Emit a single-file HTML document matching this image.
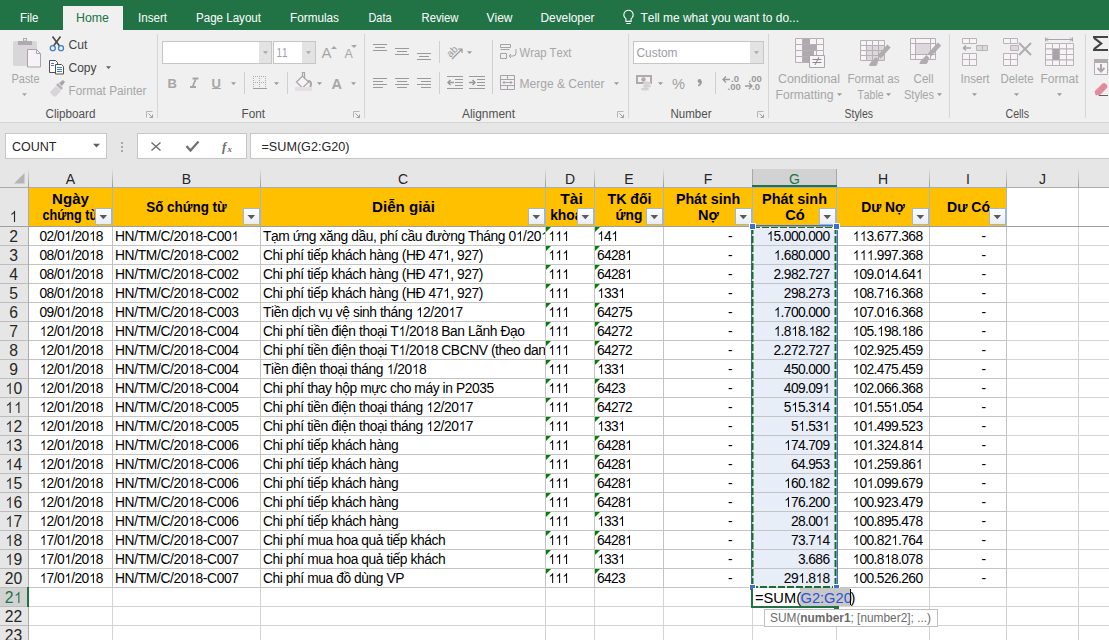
<!DOCTYPE html>
<html><head><meta charset="utf-8"><title>Excel</title>
<style>html,body{margin:0;padding:0;width:1109px;height:640px;overflow:hidden;background:#fff;font-family:"Liberation Sans",sans-serif;}svg{display:block} text{font-kerning:none}</style>
</head><body>
<svg width="1109" height="640" viewBox="0 0 1109 640" font-family="Liberation Sans, sans-serif" shape-rendering="auto"><defs><linearGradient id="hsep" x1="0" y1="0" x2="0" y2="1"><stop offset="0" stop-color="#e2e2e2"/><stop offset="1" stop-color="#9a9a9a"/></linearGradient><linearGradient id="fb" x1="0" y1="0" x2="0" y2="1"><stop offset="0" stop-color="#ffffff"/><stop offset="1" stop-color="#e8ecf2"/></linearGradient></defs><rect x="0" y="0" width="1109" height="30" fill="#217346" />
<rect x="63" y="6" width="60" height="25" fill="#f0f0f0" />
<text x="20" y="22" font-size="12" fill="#ffffff" textLength="18.5" lengthAdjust="spacingAndGlyphs" >File</text>
<text x="138" y="22" font-size="12" fill="#ffffff" textLength="29" lengthAdjust="spacingAndGlyphs" >Insert</text>
<text x="196" y="22" font-size="12" fill="#ffffff" textLength="65" lengthAdjust="spacingAndGlyphs" >Page Layout</text>
<text x="290" y="22" font-size="12" fill="#ffffff" textLength="49" lengthAdjust="spacingAndGlyphs" >Formulas</text>
<text x="368.5" y="22" font-size="12" fill="#ffffff" textLength="23" lengthAdjust="spacingAndGlyphs" >Data</text>
<text x="421.5" y="22" font-size="12" fill="#ffffff" textLength="37" lengthAdjust="spacingAndGlyphs" >Review</text>
<text x="486.5" y="22" font-size="12" fill="#ffffff" textLength="26" lengthAdjust="spacingAndGlyphs" >View</text>
<text x="540.5" y="22" font-size="12" fill="#ffffff" textLength="54" lengthAdjust="spacingAndGlyphs" >Developer</text>
<text x="76" y="22" font-size="12" fill="#217346" textLength="33" lengthAdjust="spacingAndGlyphs" >Home</text>
<path d="M628.5 10.2 a4.6 4.6 0 0 0 -2.6 8.4 v2.8 h5.2 v-2.8 a4.6 4.6 0 0 0 -2.6 -8.4 z M626.3 23.5 h4.4" fill="none" stroke="#ffffff" stroke-width="1.1" />
<text x="640.5" y="22" font-size="12" fill="#ffffff" textLength="158.5" lengthAdjust="spacingAndGlyphs" >Tell me what you want to do...</text>
<rect x="0" y="30" width="1109" height="92" fill="#f0f0f0" />
<rect x="0" y="122" width="1109" height="1" fill="#d5d5d5" />
<rect x="157" y="34" width="1" height="84" fill="#d5d5d5" />
<rect x="364" y="34" width="1" height="84" fill="#d5d5d5" />
<rect x="628" y="34" width="1" height="84" fill="#d5d5d5" />
<rect x="768" y="34" width="1" height="84" fill="#d5d5d5" />
<rect x="949" y="34" width="1" height="84" fill="#d5d5d5" />
<rect x="1085" y="34" width="1" height="84" fill="#d5d5d5" />
<text x="45.5" y="118" font-size="12" fill="#505050" textLength="50" lengthAdjust="spacingAndGlyphs" >Clipboard</text>
<text x="241.5" y="118" font-size="12" fill="#505050" textLength="23.5" lengthAdjust="spacingAndGlyphs" >Font</text>
<text x="462" y="118" font-size="12" fill="#505050" textLength="53" lengthAdjust="spacingAndGlyphs" >Alignment</text>
<text x="670.5" y="118" font-size="12" fill="#505050" textLength="41" lengthAdjust="spacingAndGlyphs" >Number</text>
<text x="844.5" y="118" font-size="12" fill="#505050" textLength="28.5" lengthAdjust="spacingAndGlyphs" >Styles</text>
<text x="1005.5" y="118" font-size="12" fill="#505050" textLength="23.5" lengthAdjust="spacingAndGlyphs" >Cells</text>
<path d="M146.5 117.5 v-6 h6" fill="none" stroke="#b4b4b4" stroke-width="1" />
<path d="M148.5 113.5 l4 4 M152.5 114.5 v3 h-3" fill="none" stroke="#a0a0a0" stroke-width="1" />
<path d="M353.5 117.5 v-6 h6" fill="none" stroke="#b4b4b4" stroke-width="1" />
<path d="M355.5 113.5 l4 4 M359.5 114.5 v3 h-3" fill="none" stroke="#a0a0a0" stroke-width="1" />
<path d="M617.5 117.5 v-6 h6" fill="none" stroke="#b4b4b4" stroke-width="1" />
<path d="M619.5 113.5 l4 4 M623.5 114.5 v3 h-3" fill="none" stroke="#a0a0a0" stroke-width="1" />
<path d="M757.5 117.5 v-6 h6" fill="none" stroke="#b4b4b4" stroke-width="1" />
<path d="M759.5 113.5 l4 4 M763.5 114.5 v3 h-3" fill="none" stroke="#a0a0a0" stroke-width="1" />
<rect x="13" y="41" width="24" height="25" fill="#d9d6da" rx="1.5"/>
<rect x="18" y="41" width="14" height="4" fill="#aeaaae" />
<rect x="23" y="38" width="4" height="4" fill="#aeaaae" />
<rect x="24" y="39" width="2" height="1.5" fill="#f0f0f0" />
<path d="M27.5 49.5 h9 l4 4 v13.5 h-13 z" fill="#f6f2f6" stroke="#a8a4a8" stroke-width="1" />
<path d="M36.5 49.5 v4 h4" fill="none" stroke="#a8a4a8" stroke-width="1" />
<text x="11.5" y="83" font-size="12" fill="#a6a6a6" textLength="28" lengthAdjust="spacingAndGlyphs" >Paste</text>
<path d="M22.0 93.3 h5 l-2.5 2.8 z" fill="#a6a6a6" />
<path d="M52.5 36.5 L59.5 46 M60.5 36.5 L53.5 46" fill="none" stroke="#484848" stroke-width="1.6" />
<circle cx="52.8" cy="48.2" r="2.5" fill="none" stroke="#3d7fc9" stroke-width="1.3"/>
<circle cx="61" cy="48.2" r="2.5" fill="none" stroke="#3d7fc9" stroke-width="1.3"/>
<text x="68.5" y="49" font-size="12" fill="#444444" textLength="19" lengthAdjust="spacingAndGlyphs" >Cut</text>
<path d="M49.5 60.5 h6 l2 2 v10 h-8 z" fill="#ffffff" stroke="#505050" stroke-width="1" />
<path d="M55.5 64.5 h6 l2 2 v7.5 h-8 z" fill="#ffffff" stroke="#505050" stroke-width="1" />
<rect x="57" y="67" width="5" height="1" fill="#3d7fc9" />
<rect x="57" y="69" width="5" height="1" fill="#3d7fc9" />
<rect x="57" y="71" width="5" height="1" fill="#3d7fc9" />
<rect x="51" y="63" width="3" height="1" fill="#3d7fc9" />
<rect x="51" y="65" width="3" height="1" fill="#3d7fc9" />
<text x="68.5" y="72" font-size="12" fill="#444444" textLength="28" lengthAdjust="spacingAndGlyphs" >Copy</text>
<path d="M106.0 66.3 h5 l-2.5 2.8 z" fill="#606060" />
<path d="M50 92 l6 -6 l5 5 l-6 6 q-3 -1 -5 -5 z" fill="#d8d4d8" />
<path d="M56 85 l2 -2 l5 5 l-2 2 z" fill="#b8b4b8" />
<path d="M59 83 l4 -3 l2 2 l-3 4 z" fill="#a8a4a8" />
<text x="68.5" y="95" font-size="12" fill="#a6a6a6" textLength="78" lengthAdjust="spacingAndGlyphs" >Format Painter</text>
<rect x="162" y="41" width="110" height="23" fill="#c6c6c6" />
<rect x="163" y="42" width="108" height="21" fill="#ffffff" />
<rect x="259" y="42" width="12" height="21" fill="#e3e3e3" />
<path d="M263.0 51.3 h5 l-2.5 2.8 z" fill="#a6a6a6" />
<rect x="273" y="41" width="43" height="23" fill="#c6c6c6" />
<rect x="274" y="42" width="41" height="21" fill="#ffffff" />
<rect x="302" y="42" width="13" height="21" fill="#e3e3e3" />
<path d="M306.0 51.3 h5 l-2.5 2.8 z" fill="#a6a6a6" />
<text x="276.5" y="57" font-size="12" fill="#a09aa8" textLength="11" lengthAdjust="spacingAndGlyphs" >11</text>
<text x="321.5" y="58" font-size="15" fill="#a6a6a6" >A</text>
<path d="M331 49 l3 -3 l3 3 z" fill="#a6a6a6" />
<text x="344.5" y="58" font-size="12.5" fill="#a6a6a6" >A</text>
<path d="M351 45 h6 l-3 3 z" fill="#a6a6a6" />
<text x="167.5" y="87.5" font-size="13" fill="#a6a6a6" font-weight="bold" >B</text>
<path d="M192.5 78.5 h6 M190 87 h6 M196 78.5 L192.5 87" fill="none" stroke="#a6a6a6" stroke-width="1.8" />
<text x="211.5" y="87.5" font-size="13" fill="#a6a6a6" font-weight="bold" >U</text>
<rect x="212" y="88" width="9" height="1" fill="#a6a6a6" />
<path d="M231.0 82.3 h5 l-2.5 2.8 z" fill="#9a9a9a" />
<rect x="244" y="72" width="1" height="22" fill="#d0d0d0" />
<rect x="253" y="76" width="1" height="1" fill="#b0a8b8" />
<rect x="255" y="76" width="1" height="1" fill="#b0a8b8" />
<rect x="257" y="76" width="1" height="1" fill="#b0a8b8" />
<rect x="259" y="76" width="1" height="1" fill="#b0a8b8" />
<rect x="261" y="76" width="1" height="1" fill="#b0a8b8" />
<rect x="263" y="76" width="1" height="1" fill="#b0a8b8" />
<rect x="265" y="76" width="1" height="1" fill="#b0a8b8" />
<rect x="253" y="82" width="1" height="1" fill="#b0a8b8" />
<rect x="255" y="82" width="1" height="1" fill="#b0a8b8" />
<rect x="257" y="82" width="1" height="1" fill="#b0a8b8" />
<rect x="259" y="82" width="1" height="1" fill="#b0a8b8" />
<rect x="261" y="82" width="1" height="1" fill="#b0a8b8" />
<rect x="263" y="82" width="1" height="1" fill="#b0a8b8" />
<rect x="265" y="82" width="1" height="1" fill="#b0a8b8" />
<rect x="253" y="76" width="1" height="1" fill="#b0a8b8" />
<rect x="253" y="78" width="1" height="1" fill="#b0a8b8" />
<rect x="253" y="80" width="1" height="1" fill="#b0a8b8" />
<rect x="253" y="82" width="1" height="1" fill="#b0a8b8" />
<rect x="253" y="84" width="1" height="1" fill="#b0a8b8" />
<rect x="253" y="86" width="1" height="1" fill="#b0a8b8" />
<rect x="259" y="76" width="1" height="1" fill="#b0a8b8" />
<rect x="259" y="78" width="1" height="1" fill="#b0a8b8" />
<rect x="259" y="80" width="1" height="1" fill="#b0a8b8" />
<rect x="259" y="82" width="1" height="1" fill="#b0a8b8" />
<rect x="259" y="84" width="1" height="1" fill="#b0a8b8" />
<rect x="259" y="86" width="1" height="1" fill="#b0a8b8" />
<rect x="265" y="76" width="1" height="1" fill="#b0a8b8" />
<rect x="265" y="78" width="1" height="1" fill="#b0a8b8" />
<rect x="265" y="80" width="1" height="1" fill="#b0a8b8" />
<rect x="265" y="82" width="1" height="1" fill="#b0a8b8" />
<rect x="265" y="84" width="1" height="1" fill="#b0a8b8" />
<rect x="265" y="86" width="1" height="1" fill="#b0a8b8" />
<rect x="253" y="88" width="14" height="1" fill="#a0a0a0" />
<path d="M274.0 82.3 h5 l-2.5 2.8 z" fill="#9a9a9a" />
<rect x="287" y="72" width="1" height="22" fill="#d0d0d0" />
<path d="M296.5 82 l6 -6 l6 6 l-6 6 z" fill="#f6f2f6" stroke="#a6a6a6" stroke-width="1.2" />
<path d="M302.5 76 v-3.5 h2 v6" fill="none" stroke="#a6a6a6" stroke-width="1.2" />
<path d="M308 81 q3 0 3 3 q0 2 -1 3" fill="none" stroke="#a6a6a6" stroke-width="2" />
<rect x="295" y="87" width="17" height="4" fill="#e6e0e6" />
<path d="M317.0 82.3 h5 l-2.5 2.8 z" fill="#9a9a9a" />
<text x="331.5" y="88.5" font-size="14.5" fill="#a6a6a6" font-weight="bold" >A</text>
<path d="M351.0 82.3 h5 l-2.5 2.8 z" fill="#9a9a9a" />
<rect x="373" y="44" width="14" height="1" fill="#9a9a9a" />
<rect x="375" y="47" width="10" height="1" fill="#9a9a9a" />
<rect x="373" y="50" width="14" height="1" fill="#9a9a9a" />
<rect x="395" y="48" width="14" height="1" fill="#9a9a9a" />
<rect x="397" y="51" width="10" height="1" fill="#9a9a9a" />
<rect x="395" y="54" width="14" height="1" fill="#9a9a9a" />
<rect x="417" y="53" width="14" height="1" fill="#9a9a9a" />
<rect x="419" y="56" width="10" height="1" fill="#9a9a9a" />
<rect x="417" y="59" width="14" height="1" fill="#9a9a9a" />
<rect x="373" y="78" width="14" height="1" fill="#9a9a9a" />
<rect x="373" y="81" width="10" height="1" fill="#9a9a9a" />
<rect x="373" y="84" width="14" height="1" fill="#9a9a9a" />
<rect x="373" y="87" width="10" height="1" fill="#9a9a9a" />
<rect x="395" y="78" width="14" height="1" fill="#9a9a9a" />
<rect x="397" y="81" width="10" height="1" fill="#9a9a9a" />
<rect x="395" y="84" width="14" height="1" fill="#9a9a9a" />
<rect x="397" y="87" width="10" height="1" fill="#9a9a9a" />
<rect x="417" y="78" width="14" height="1" fill="#9a9a9a" />
<rect x="421" y="81" width="10" height="1" fill="#9a9a9a" />
<rect x="417" y="84" width="14" height="1" fill="#9a9a9a" />
<rect x="421" y="87" width="10" height="1" fill="#9a9a9a" />
<rect x="439" y="41" width="1" height="22" fill="#d0d0d0" />
<rect x="439" y="72" width="1" height="22" fill="#d0d0d0" />
<text x="447" y="55" font-size="10" fill="#9a9a9a" transform="rotate(-45 452 52)">ab</text>
<path d="M452 59 l10 -10 M458 49 h4 v4" fill="none" stroke="#9a9a9a" stroke-width="1.2" />
<path d="M467.0 51.3 h5 l-2.5 2.8 z" fill="#9a9a9a" />
<rect x="447" y="76" width="16" height="1" fill="#9a9a9a" />
<rect x="455" y="79" width="8" height="1" fill="#9a9a9a" />
<rect x="455" y="82" width="8" height="1" fill="#9a9a9a" />
<rect x="455" y="85" width="8" height="1" fill="#9a9a9a" />
<rect x="447" y="88" width="16" height="1" fill="#9a9a9a" />
<path d="M448 82.5 h6 M450.5 80 l-2.5 2.5 l2.5 2.5" fill="none" stroke="#9a9a9a" stroke-width="1.5" />
<rect x="469" y="76" width="16" height="1" fill="#9a9a9a" />
<rect x="477" y="79" width="8" height="1" fill="#9a9a9a" />
<rect x="477" y="82" width="8" height="1" fill="#9a9a9a" />
<rect x="477" y="85" width="8" height="1" fill="#9a9a9a" />
<rect x="469" y="88" width="16" height="1" fill="#9a9a9a" />
<path d="M469 82.5 h6 M472.5 80 l2.5 2.5 l-2.5 2.5" fill="none" stroke="#9a9a9a" stroke-width="1.5" />
<rect x="492" y="40" width="1" height="54" fill="#d0d0d0" />
<path d="M500.5 44.5 h10 v3 h-10 z M500.5 49.5 h9 M500.5 53.5 h6 v5 h-6 z" fill="none" stroke="#a6a2a8" stroke-width="1" />
<path d="M516 49 v4 q0 3 -3 3 h-4 M511 54 l-2 2 l2 2" fill="none" stroke="#a6a2a8" stroke-width="1" />
<text x="519.5" y="57" font-size="12" fill="#a6a6a6" textLength="52" lengthAdjust="spacingAndGlyphs" >Wrap Text</text>
<path d="M500.5 75.5 h14 v14 h-14 z M500.5 79.5 h14 M500.5 85.5 h14 M507.5 75.5 v4 M507.5 85.5 v4" fill="none" stroke="#a6a2a8" stroke-width="1" />
<path d="M503 82.5 h9 M504.5 81 l-1.5 1.5 l1.5 1.5 M510.5 81 l1.5 1.5 l-1.5 1.5" fill="none" stroke="#a6a2a8" stroke-width="1" />
<text x="519.5" y="88" font-size="12" fill="#a6a6a6" textLength="85" lengthAdjust="spacingAndGlyphs" >Merge &amp; Center</text>
<path d="M614.0 82.3 h5 l-2.5 2.8 z" fill="#9a9a9a" />
<rect x="633" y="41" width="131" height="23" fill="#c6c6c6" />
<rect x="634" y="42" width="129" height="21" fill="#ffffff" />
<rect x="750" y="42" width="13" height="21" fill="#e3e3e3" />
<path d="M754.0 51.3 h5 l-2.5 2.8 z" fill="#a6a6a6" />
<text x="636.5" y="57" font-size="12" fill="#a09aa8" textLength="41" lengthAdjust="spacingAndGlyphs" >Custom</text>
<rect x="636" y="75" width="16" height="9" fill="#aeaaae" />
<rect x="638" y="77" width="12" height="5" fill="#f3eff3" />
<circle cx="643.5" cy="79.5" r="2.2" fill="#aeaaae"/>
<ellipse cx="647" cy="83" rx="4" ry="1.6" fill="#d4d0d4"/>
<ellipse cx="647" cy="86" rx="4" ry="1.6" fill="#d4d0d4"/>
<ellipse cx="645" cy="89" rx="4" ry="1.6" fill="#d4d0d4"/>
<path d="M658.0 82.3 h5 l-2.5 2.8 z" fill="#9a9a9a" />
<text x="672" y="89" font-size="15" fill="#a0a0a0" textLength="13" lengthAdjust="spacingAndGlyphs" >%</text>
<circle cx="699.5" cy="81" r="1.9" fill="#9a9a9a"/>
<path d="M701.2 81 q0.3 3 -3 4.8" fill="none" stroke="#9a9a9a" stroke-width="1.5" />
<rect x="715" y="72" width="1" height="22" fill="#d0d0d0" />
<text x="731" y="82" font-size="9.5" fill="#9a9a9a" font-weight="bold" >.0</text>
<text x="727.5" y="89.5" font-size="9.5" fill="#9a9a9a" font-weight="bold" >.00</text>
<path d="M723 79.5 h7 M726 76.5 l-3 3 l3 3" fill="none" stroke="#9a9a9a" stroke-width="1.3" />
<text x="748.5" y="82" font-size="9.5" fill="#9a9a9a" font-weight="bold" >.00</text>
<text x="752" y="89.5" font-size="9.5" fill="#9a9a9a" font-weight="bold" >.0</text>
<path d="M745 86 h7 M749 83 l3 3 l-3 3" fill="none" stroke="#9a9a9a" stroke-width="1.3" />
<path d="M795.5 38.5 h7 v6 h-7 z" fill="#f7f3f7" stroke="#b4b0b4" stroke-width="1" />
<path d="M802.5 38.5 h7 v6 h-7 z" fill="#f7f3f7" stroke="#b4b0b4" stroke-width="1" />
<path d="M809.5 38.5 h7 v6 h-7 z" fill="#f7f3f7" stroke="#b4b0b4" stroke-width="1" />
<path d="M816.5 38.5 h7 v6 h-7 z" fill="#f7f3f7" stroke="#b4b0b4" stroke-width="1" />
<path d="M795.5 44.5 h7 v6 h-7 z" fill="#f7f3f7" stroke="#b4b0b4" stroke-width="1" />
<path d="M802.5 44.5 h7 v6 h-7 z" fill="#f7f3f7" stroke="#b4b0b4" stroke-width="1" />
<path d="M809.5 44.5 h7 v6 h-7 z" fill="#f7f3f7" stroke="#b4b0b4" stroke-width="1" />
<path d="M816.5 44.5 h7 v6 h-7 z" fill="#f7f3f7" stroke="#b4b0b4" stroke-width="1" />
<path d="M795.5 50.5 h7 v6 h-7 z" fill="#f7f3f7" stroke="#b4b0b4" stroke-width="1" />
<path d="M802.5 50.5 h7 v6 h-7 z" fill="#f7f3f7" stroke="#b4b0b4" stroke-width="1" />
<path d="M809.5 50.5 h7 v6 h-7 z" fill="#f7f3f7" stroke="#b4b0b4" stroke-width="1" />
<path d="M816.5 50.5 h7 v6 h-7 z" fill="#f7f3f7" stroke="#b4b0b4" stroke-width="1" />
<path d="M795.5 56.5 h7 v6 h-7 z" fill="#f7f3f7" stroke="#b4b0b4" stroke-width="1" />
<path d="M802.5 56.5 h7 v6 h-7 z" fill="#f7f3f7" stroke="#b4b0b4" stroke-width="1" />
<path d="M809.5 56.5 h7 v6 h-7 z" fill="#f7f3f7" stroke="#b4b0b4" stroke-width="1" />
<path d="M816.5 56.5 h7 v6 h-7 z" fill="#f7f3f7" stroke="#b4b0b4" stroke-width="1" />
<rect x="803" y="39" width="7" height="5" fill="#aeaaae" />
<rect x="803" y="45" width="14" height="5" fill="#aeaaae" />
<rect x="803" y="51" width="11" height="5" fill="#aeaaae" />
<rect x="803" y="57" width="7" height="5" fill="#aeaaae" />
<path d="M809.5 55.5 h15 v12 h-15 z" fill="#f7f3f7" stroke="#a8a4a8" stroke-width="1" />
<path d="M812.5 59.5 h9 M812.5 62.5 h9 M819 57 l-4 8" fill="none" stroke="#888888" stroke-width="1" />
<text x="778" y="83" font-size="12" fill="#a6a6a6" textLength="62" lengthAdjust="spacingAndGlyphs" >Conditional</text>
<text x="775.5" y="99" font-size="12" fill="#a6a6a6" textLength="58" lengthAdjust="spacingAndGlyphs" >Formatting</text>
<path d="M837.0 93.3 h5 l-2.5 2.8 z" fill="#9a9a9a" />
<path d="M860.5 40.5 h6 v5 h-6 z" fill="#f7f3f7" stroke="#b4b0b4" stroke-width="1" />
<path d="M866.5 40.5 h6 v5 h-6 z" fill="#f7f3f7" stroke="#b4b0b4" stroke-width="1" />
<path d="M872.5 40.5 h6 v5 h-6 z" fill="#f7f3f7" stroke="#b4b0b4" stroke-width="1" />
<path d="M878.5 40.5 h6 v5 h-6 z" fill="#f7f3f7" stroke="#b4b0b4" stroke-width="1" />
<path d="M860.5 45.5 h6 v5 h-6 z" fill="#f7f3f7" stroke="#b4b0b4" stroke-width="1" />
<path d="M866.5 45.5 h6 v5 h-6 z" fill="#dcd8dc" stroke="#b4b0b4" stroke-width="1" />
<path d="M872.5 45.5 h6 v5 h-6 z" fill="#dcd8dc" stroke="#b4b0b4" stroke-width="1" />
<path d="M878.5 45.5 h6 v5 h-6 z" fill="#dcd8dc" stroke="#b4b0b4" stroke-width="1" />
<path d="M860.5 50.5 h6 v5 h-6 z" fill="#f7f3f7" stroke="#b4b0b4" stroke-width="1" />
<path d="M866.5 50.5 h6 v5 h-6 z" fill="#dcd8dc" stroke="#b4b0b4" stroke-width="1" />
<path d="M872.5 50.5 h6 v5 h-6 z" fill="#dcd8dc" stroke="#b4b0b4" stroke-width="1" />
<path d="M878.5 50.5 h6 v5 h-6 z" fill="#dcd8dc" stroke="#b4b0b4" stroke-width="1" />
<path d="M860.5 55.5 h6 v5 h-6 z" fill="#f7f3f7" stroke="#b4b0b4" stroke-width="1" />
<path d="M866.5 55.5 h6 v5 h-6 z" fill="#dcd8dc" stroke="#b4b0b4" stroke-width="1" />
<path d="M872.5 55.5 h6 v5 h-6 z" fill="#dcd8dc" stroke="#b4b0b4" stroke-width="1" />
<path d="M878.5 55.5 h6 v5 h-6 z" fill="#dcd8dc" stroke="#b4b0b4" stroke-width="1" />
<path d="M889 46 L879 57" fill="none" stroke="#b0acb0" stroke-width="4.5" />
<path d="M877.5 58.5 L875.5 60.5" fill="none" stroke="#b0acb0" stroke-width="4.5" />
<path d="M876 58 q4 3 0 8 h-7 q1 -5 7 -8 z" fill="#b0acb0" />
<text x="847.5" y="83" font-size="12" fill="#a6a6a6" textLength="52" lengthAdjust="spacingAndGlyphs" >Format as</text>
<text x="857.5" y="99" font-size="12" fill="#a6a6a6" textLength="26" lengthAdjust="spacingAndGlyphs" >Table</text>
<path d="M886.0 93.3 h5 l-2.5 2.8 z" fill="#9a9a9a" />
<path d="M910.5 38.5 h25 v21 h-25 z" fill="#f7f3f7" stroke="#b4b0b4" stroke-width="1" />
<path d="M915.5 38.5 v21 M930.5 38.5 v21 M910.5 43.5 h25 M910.5 54.5 h25" fill="none" stroke="#b4b0b4" stroke-width="1" />
<rect x="916" y="44" width="14" height="10" fill="#dcd8dc" />
<path d="M939.5 44 L929.5 55" fill="none" stroke="#b0acb0" stroke-width="4.5" />
<path d="M928.0 56.5 L926.0 58.5" fill="none" stroke="#b0acb0" stroke-width="4.5" />
<path d="M926.5 56 q4 3 0 8 h-7 q1 -5 7 -8 z" fill="#b0acb0" />
<text x="913.5" y="83" font-size="12" fill="#a6a6a6" textLength="20" lengthAdjust="spacingAndGlyphs" >Cell</text>
<text x="904" y="99" font-size="12" fill="#a6a6a6" textLength="30" lengthAdjust="spacingAndGlyphs" >Styles</text>
<path d="M937.0 93.3 h5 l-2.5 2.8 z" fill="#9a9a9a" />
<path d="M962.5 38.5 h7 v5 h-7 z" fill="#f7f3f7" stroke="#b8b4b8" stroke-width="1" />
<path d="M969.5 38.5 h7 v5 h-7 z" fill="#f7f3f7" stroke="#b8b4b8" stroke-width="1" />
<path d="M976.5 45.5 h11 v5 h-11 z" fill="#dcd8dc" stroke="#b8b4b8" stroke-width="1" />
<rect x="982" y="46" width="1" height="4" fill="#b8b4b8" />
<path d="M963 48 h8 M966 45.5 l-2.5 2.5 l2.5 2.5" fill="none" stroke="#a8a4a8" stroke-width="1.5" />
<path d="M962.5 53.5 h7 v6 h-7 z" fill="#f7f3f7" stroke="#b8b4b8" stroke-width="1" />
<path d="M969.5 53.5 h7 v6 h-7 z" fill="#f7f3f7" stroke="#b8b4b8" stroke-width="1" />
<path d="M962.5 59.5 h7 v6 h-7 z" fill="#f7f3f7" stroke="#b8b4b8" stroke-width="1" />
<path d="M969.5 59.5 h7 v6 h-7 z" fill="#f7f3f7" stroke="#b8b4b8" stroke-width="1" />
<text x="960.5" y="83" font-size="12" fill="#a6a6a6" textLength="29" lengthAdjust="spacingAndGlyphs" >Insert</text>
<path d="M972.0 93.3 h5 l-2.5 2.8 z" fill="#9a9a9a" />
<path d="M1003.5 38.5 h7 v5 h-7 z" fill="#f7f3f7" stroke="#b8b4b8" stroke-width="1" />
<path d="M1010.5 38.5 h7 v5 h-7 z" fill="#f7f3f7" stroke="#b8b4b8" stroke-width="1" />
<path d="M1010.5 45.5 h8 v5 h-8 z" fill="#dcd8dc" stroke="#b8b4b8" stroke-width="1" />
<path d="M1019 43 l12 12 M1031 43 l-12 12" fill="none" stroke="#b0acb0" stroke-width="2" />
<path d="M1003.5 53.5 h7 v6 h-7 z" fill="#f7f3f7" stroke="#b8b4b8" stroke-width="1" />
<path d="M1010.5 53.5 h7 v6 h-7 z" fill="#f7f3f7" stroke="#b8b4b8" stroke-width="1" />
<path d="M1003.5 59.5 h7 v6 h-7 z" fill="#f7f3f7" stroke="#b8b4b8" stroke-width="1" />
<path d="M1010.5 59.5 h7 v6 h-7 z" fill="#f7f3f7" stroke="#b8b4b8" stroke-width="1" />
<text x="1000.5" y="83" font-size="12" fill="#a6a6a6" textLength="33" lengthAdjust="spacingAndGlyphs" >Delete</text>
<path d="M1014.0 93.3 h5 l-2.5 2.8 z" fill="#9a9a9a" />
<path d="M1045.5 37.5 v4 M1072.5 37.5 v4 M1046 39.5 h26 M1048 37.5 l-2 2 l2 2 M1070 37.5 l2 2 l-2 2" fill="none" stroke="#a8a4a8" stroke-width="1" />
<path d="M1045.5 43.5 h7 v5.5 h-7 z" fill="#f7f3f7" stroke="#b8b4b8" stroke-width="1" />
<path d="M1052.5 43.5 h7 v5.5 h-7 z" fill="#f7f3f7" stroke="#b8b4b8" stroke-width="1" />
<path d="M1059.5 43.5 h7 v5.5 h-7 z" fill="#f7f3f7" stroke="#b8b4b8" stroke-width="1" />
<path d="M1066.5 43.5 h7 v5.5 h-7 z" fill="#f7f3f7" stroke="#b8b4b8" stroke-width="1" />
<path d="M1045.5 49.0 h7 v5.5 h-7 z" fill="#f7f3f7" stroke="#b8b4b8" stroke-width="1" />
<path d="M1052.5 49.0 h7 v5.5 h-7 z" fill="#f7f3f7" stroke="#b8b4b8" stroke-width="1" />
<path d="M1059.5 49.0 h7 v5.5 h-7 z" fill="#f7f3f7" stroke="#b8b4b8" stroke-width="1" />
<path d="M1066.5 49.0 h7 v5.5 h-7 z" fill="#f7f3f7" stroke="#b8b4b8" stroke-width="1" />
<path d="M1045.5 54.5 h7 v5.5 h-7 z" fill="#f7f3f7" stroke="#b8b4b8" stroke-width="1" />
<path d="M1052.5 54.5 h7 v5.5 h-7 z" fill="#f7f3f7" stroke="#b8b4b8" stroke-width="1" />
<path d="M1059.5 54.5 h7 v5.5 h-7 z" fill="#f7f3f7" stroke="#b8b4b8" stroke-width="1" />
<path d="M1066.5 54.5 h7 v5.5 h-7 z" fill="#f7f3f7" stroke="#b8b4b8" stroke-width="1" />
<path d="M1045.5 60.0 h7 v5.5 h-7 z" fill="#f7f3f7" stroke="#b8b4b8" stroke-width="1" />
<path d="M1052.5 60.0 h7 v5.5 h-7 z" fill="#f7f3f7" stroke="#b8b4b8" stroke-width="1" />
<path d="M1059.5 60.0 h7 v5.5 h-7 z" fill="#f7f3f7" stroke="#b8b4b8" stroke-width="1" />
<path d="M1066.5 60.0 h7 v5.5 h-7 z" fill="#f7f3f7" stroke="#b8b4b8" stroke-width="1" />
<rect x="1053" y="49" width="6" height="11" fill="#a8a4a8" />
<text x="1040.5" y="83" font-size="12" fill="#a6a6a6" textLength="38" lengthAdjust="spacingAndGlyphs" >Format</text>
<path d="M1057.0 93.3 h5 l-2.5 2.8 z" fill="#9a9a9a" />
<path d="M1093 37 h15 M1094 37.8 l7.2 5.7 l-7.2 5.7 M1093 50 h15" fill="none" stroke="#444444" stroke-width="2.2" />
<path d="M1094.5 59.5 h13 v15 h-13 z" fill="#f7f3f7" stroke="#b0acb0" stroke-width="1" />
<rect x="1094" y="59" width="14" height="4" fill="#b0acb0" />
<path d="M1101 64 v7.5 M1097.5 68 l3.5 3.5 l3.5 -3.5" fill="none" stroke="#a8a4a8" stroke-width="2" />
<path d="M1094.5 91.5 l8 -8 q1.5 -1 3 0 l1.5 1.5 q1 1.5 0 3 l-8 8 z" fill="#e48a9c" />
<path d="M1094.5 91.5 l3 3 l-1.5 1 z" fill="#d06f84" />
<rect x="1099" y="95" width="9" height="1" fill="#606060" />
<rect x="0" y="123" width="1109" height="46" fill="#e6e6e6" />
<rect x="5" y="133" width="102" height="26" fill="#c6c6c6" />
<rect x="6" y="134" width="100" height="24" fill="#ffffff" />
<text x="12" y="151" font-size="12.5" fill="#262626" textLength="44.5" lengthAdjust="spacingAndGlyphs" >COUNT</text>
<path d="M93.0 143.8 h7 l-3.5 3.8 z" fill="#606060" />
<rect x="121" y="142" width="2" height="2" fill="#a8a8a8" />
<rect x="121" y="146" width="2" height="2" fill="#a8a8a8" />
<rect x="121" y="150" width="2" height="2" fill="#a8a8a8" />
<rect x="137" y="133" width="110" height="26" fill="#c6c6c6" />
<rect x="138" y="134" width="108" height="24" fill="#ffffff" />
<path d="M151.5 142.5 l9 8 M160.5 142.5 l-9 8" fill="none" stroke="#707070" stroke-width="1.5" />
<path d="M186.5 146 l4 4.5 l8 -9" fill="none" stroke="#707070" stroke-width="2.2" />
<text x="222" y="151" font-size="13" fill="#707070" font-family="Liberation Serif" font-style="italic" font-weight="bold">f</text>
<text x="227.5" y="152" font-size="9" fill="#707070" font-family="Liberation Serif" font-style="italic" font-weight="bold">x</text>
<rect x="250" y="133" width="859" height="26" fill="#c6c6c6" />
<rect x="251" y="134" width="858" height="24" fill="#ffffff" />
<text x="261.5" y="150.6" font-size="12.5" fill="#262626" textLength="88" lengthAdjust="spacingAndGlyphs" >=SUM(G2:G20)</text>
<rect x="0" y="169" width="1109" height="18" fill="#e6e6e6" />
<rect x="0" y="187" width="28" height="453" fill="#e6e6e6" />
<rect x="29" y="188" width="1080" height="452" fill="#ffffff" />
<path d="M14 183.5 L24.5 173 V183.5 Z" fill="#b4b4b4" />
<rect x="28" y="169" width="1" height="18" fill="url(#hsep)" />
<rect x="112" y="169" width="1" height="18" fill="url(#hsep)" />
<rect x="260" y="169" width="1" height="18" fill="url(#hsep)" />
<rect x="545" y="169" width="1" height="18" fill="url(#hsep)" />
<rect x="594" y="169" width="1" height="18" fill="url(#hsep)" />
<rect x="663" y="169" width="1" height="18" fill="url(#hsep)" />
<rect x="752" y="169" width="1" height="18" fill="url(#hsep)" />
<rect x="836" y="169" width="1" height="18" fill="url(#hsep)" />
<rect x="929" y="169" width="1" height="18" fill="url(#hsep)" />
<rect x="1006" y="169" width="1" height="18" fill="url(#hsep)" />
<rect x="1078" y="169" width="1" height="18" fill="url(#hsep)" />
<rect x="0" y="187" width="1109" height="1" fill="#ababab" />
<rect x="753" y="169" width="83" height="17" fill="#d2d2d2" />
<rect x="752" y="169" width="1" height="18" fill="#a8a8a8" />
<rect x="836" y="169" width="1" height="18" fill="#a8a8a8" />
<rect x="752" y="185" width="85" height="2" fill="#217346" />
<text x="70.5" y="184" font-size="14" fill="#262626" text-anchor="middle" >A</text>
<text x="186.5" y="184" font-size="14" fill="#262626" text-anchor="middle" >B</text>
<text x="403.0" y="184" font-size="14" fill="#262626" text-anchor="middle" >C</text>
<text x="570.0" y="184" font-size="14" fill="#262626" text-anchor="middle" >D</text>
<text x="629.0" y="184" font-size="14" fill="#262626" text-anchor="middle" >E</text>
<text x="708.0" y="184" font-size="14" fill="#262626" text-anchor="middle" >F</text>
<text x="794.5" y="184" font-size="14" fill="#217346" text-anchor="middle" >G</text>
<text x="883.0" y="184" font-size="14" fill="#262626" text-anchor="middle" >H</text>
<text x="968.0" y="184" font-size="14" fill="#262626" text-anchor="middle" >I</text>
<text x="1042.5" y="184" font-size="14" fill="#262626" text-anchor="middle" >J</text>
<rect x="29" y="188" width="977" height="38" fill="#ffc000" />
<rect x="112" y="227" width="1" height="413" fill="#d4d4d4" />
<rect x="260" y="227" width="1" height="413" fill="#d4d4d4" />
<rect x="545" y="227" width="1" height="413" fill="#d4d4d4" />
<rect x="594" y="227" width="1" height="413" fill="#d4d4d4" />
<rect x="663" y="227" width="1" height="413" fill="#d4d4d4" />
<rect x="752" y="227" width="1" height="413" fill="#d4d4d4" />
<rect x="836" y="227" width="1" height="413" fill="#d4d4d4" />
<rect x="929" y="227" width="1" height="413" fill="#d4d4d4" />
<rect x="1006" y="227" width="1" height="413" fill="#d4d4d4" />
<rect x="1078" y="227" width="1" height="413" fill="#d4d4d4" />
<rect x="112" y="227" width="1" height="361" fill="#c4c4c4" />
<rect x="260" y="227" width="1" height="361" fill="#c4c4c4" />
<rect x="545" y="227" width="1" height="361" fill="#c4c4c4" />
<rect x="594" y="227" width="1" height="361" fill="#c4c4c4" />
<rect x="663" y="227" width="1" height="361" fill="#c4c4c4" />
<rect x="752" y="227" width="1" height="361" fill="#c4c4c4" />
<rect x="836" y="227" width="1" height="361" fill="#c4c4c4" />
<rect x="929" y="227" width="1" height="361" fill="#c4c4c4" />
<rect x="1006" y="227" width="1" height="361" fill="#c4c4c4" />
<rect x="112" y="188" width="1" height="38" fill="#9fb6db" />
<rect x="260" y="188" width="1" height="38" fill="#9fb6db" />
<rect x="545" y="188" width="1" height="38" fill="#9fb6db" />
<rect x="594" y="188" width="1" height="38" fill="#9fb6db" />
<rect x="663" y="188" width="1" height="38" fill="#9fb6db" />
<rect x="752" y="188" width="1" height="38" fill="#9fb6db" />
<rect x="836" y="188" width="1" height="38" fill="#9fb6db" />
<rect x="929" y="188" width="1" height="38" fill="#9fb6db" />
<rect x="1006" y="188" width="1" height="38" fill="#9fb6db" />
<rect x="1078" y="188" width="1" height="38" fill="#d4d4d4" />
<rect x="29" y="245" width="1080" height="1" fill="#d4d4d4" />
<rect x="29" y="264" width="1080" height="1" fill="#d4d4d4" />
<rect x="29" y="283" width="1080" height="1" fill="#d4d4d4" />
<rect x="29" y="302" width="1080" height="1" fill="#d4d4d4" />
<rect x="29" y="321" width="1080" height="1" fill="#d4d4d4" />
<rect x="29" y="340" width="1080" height="1" fill="#d4d4d4" />
<rect x="29" y="359" width="1080" height="1" fill="#d4d4d4" />
<rect x="29" y="378" width="1080" height="1" fill="#d4d4d4" />
<rect x="29" y="397" width="1080" height="1" fill="#d4d4d4" />
<rect x="29" y="416" width="1080" height="1" fill="#d4d4d4" />
<rect x="29" y="435" width="1080" height="1" fill="#d4d4d4" />
<rect x="29" y="454" width="1080" height="1" fill="#d4d4d4" />
<rect x="29" y="473" width="1080" height="1" fill="#d4d4d4" />
<rect x="29" y="492" width="1080" height="1" fill="#d4d4d4" />
<rect x="29" y="511" width="1080" height="1" fill="#d4d4d4" />
<rect x="29" y="530" width="1080" height="1" fill="#d4d4d4" />
<rect x="29" y="549" width="1080" height="1" fill="#d4d4d4" />
<rect x="29" y="568" width="1080" height="1" fill="#d4d4d4" />
<rect x="29" y="587" width="1080" height="1" fill="#d4d4d4" />
<rect x="29" y="606" width="1080" height="1" fill="#d4d4d4" />
<rect x="29" y="625" width="1080" height="1" fill="#d4d4d4" />
<rect x="29" y="644" width="1080" height="1" fill="#d4d4d4" />
<rect x="29" y="245" width="978" height="1" fill="#c4c4c4" />
<rect x="29" y="264" width="978" height="1" fill="#c4c4c4" />
<rect x="29" y="283" width="978" height="1" fill="#c4c4c4" />
<rect x="29" y="302" width="978" height="1" fill="#c4c4c4" />
<rect x="29" y="321" width="978" height="1" fill="#c4c4c4" />
<rect x="29" y="340" width="978" height="1" fill="#c4c4c4" />
<rect x="29" y="359" width="978" height="1" fill="#c4c4c4" />
<rect x="29" y="378" width="978" height="1" fill="#c4c4c4" />
<rect x="29" y="397" width="978" height="1" fill="#c4c4c4" />
<rect x="29" y="416" width="978" height="1" fill="#c4c4c4" />
<rect x="29" y="435" width="978" height="1" fill="#c4c4c4" />
<rect x="29" y="454" width="978" height="1" fill="#c4c4c4" />
<rect x="29" y="473" width="978" height="1" fill="#c4c4c4" />
<rect x="29" y="492" width="978" height="1" fill="#c4c4c4" />
<rect x="29" y="511" width="978" height="1" fill="#c4c4c4" />
<rect x="29" y="530" width="978" height="1" fill="#c4c4c4" />
<rect x="29" y="549" width="978" height="1" fill="#c4c4c4" />
<rect x="29" y="568" width="978" height="1" fill="#c4c4c4" />
<rect x="29" y="587" width="978" height="1" fill="#c4c4c4" />
<rect x="0" y="226" width="1109" height="1" fill="#9f9f9f" />
<rect x="0" y="245" width="28" height="1" fill="#bdbdbd" />
<rect x="0" y="264" width="28" height="1" fill="#bdbdbd" />
<rect x="0" y="283" width="28" height="1" fill="#bdbdbd" />
<rect x="0" y="302" width="28" height="1" fill="#bdbdbd" />
<rect x="0" y="321" width="28" height="1" fill="#bdbdbd" />
<rect x="0" y="340" width="28" height="1" fill="#bdbdbd" />
<rect x="0" y="359" width="28" height="1" fill="#bdbdbd" />
<rect x="0" y="378" width="28" height="1" fill="#bdbdbd" />
<rect x="0" y="397" width="28" height="1" fill="#bdbdbd" />
<rect x="0" y="416" width="28" height="1" fill="#bdbdbd" />
<rect x="0" y="435" width="28" height="1" fill="#bdbdbd" />
<rect x="0" y="454" width="28" height="1" fill="#bdbdbd" />
<rect x="0" y="473" width="28" height="1" fill="#bdbdbd" />
<rect x="0" y="492" width="28" height="1" fill="#bdbdbd" />
<rect x="0" y="511" width="28" height="1" fill="#bdbdbd" />
<rect x="0" y="530" width="28" height="1" fill="#bdbdbd" />
<rect x="0" y="549" width="28" height="1" fill="#bdbdbd" />
<rect x="0" y="568" width="28" height="1" fill="#bdbdbd" />
<rect x="0" y="587" width="28" height="1" fill="#bdbdbd" />
<rect x="0" y="606" width="28" height="1" fill="#bdbdbd" />
<rect x="0" y="625" width="28" height="1" fill="#bdbdbd" />
<rect x="0" y="644" width="28" height="1" fill="#bdbdbd" />
<rect x="28" y="188" width="1" height="452" fill="#ababab" />
<rect x="0" y="588" width="27" height="18" fill="#d2d2d2" />
<rect x="27" y="587" width="2" height="20" fill="#217346" />
<text x="13.6" y="222" font-size="15.7" fill="#262626" text-anchor="middle" id="o0" > </text>
<text x="13.6" y="242" font-size="15.7" fill="#262626" text-anchor="middle" >2</text>
<text x="13.6" y="261" font-size="15.7" fill="#262626" text-anchor="middle" >3</text>
<text x="13.6" y="280" font-size="15.7" fill="#262626" text-anchor="middle" >4</text>
<text x="13.6" y="299" font-size="15.7" fill="#262626" text-anchor="middle" >5</text>
<text x="13.6" y="318" font-size="15.7" fill="#262626" text-anchor="middle" >6</text>
<text x="13.6" y="337" font-size="15.7" fill="#262626" text-anchor="middle" >7</text>
<text x="13.6" y="356" font-size="15.7" fill="#262626" text-anchor="middle" >8</text>
<text x="13.6" y="375" font-size="15.7" fill="#262626" text-anchor="middle" >9</text>
<text x="13.6" y="394" font-size="15.7" fill="#262626" text-anchor="middle" id="o1" > 0</text>
<text x="13.6" y="413" font-size="15.7" fill="#262626" text-anchor="middle" id="o2" >  </text>
<text x="13.6" y="432" font-size="15.7" fill="#262626" text-anchor="middle" id="o3" > 2</text>
<text x="13.6" y="451" font-size="15.7" fill="#262626" text-anchor="middle" id="o4" > 3</text>
<text x="13.6" y="470" font-size="15.7" fill="#262626" text-anchor="middle" id="o5" > 4</text>
<text x="13.6" y="489" font-size="15.7" fill="#262626" text-anchor="middle" id="o6" > 5</text>
<text x="13.6" y="508" font-size="15.7" fill="#262626" text-anchor="middle" id="o7" > 6</text>
<text x="13.6" y="527" font-size="15.7" fill="#262626" text-anchor="middle" id="o8" > 7</text>
<text x="13.6" y="546" font-size="15.7" fill="#262626" text-anchor="middle" id="o9" > 8</text>
<text x="13.6" y="565" font-size="15.7" fill="#262626" text-anchor="middle" id="o10" > 9</text>
<text x="13.6" y="584" font-size="15.7" fill="#262626" text-anchor="middle" >20</text>
<text x="13.6" y="603" font-size="15.7" fill="#217346" text-anchor="middle" id="o11" >2 </text>
<text x="13.6" y="622" font-size="15.7" fill="#262626" text-anchor="middle" >22</text>
<text x="13.6" y="641" font-size="15.7" fill="#262626" text-anchor="middle" >23</text>
<rect x="753" y="227" width="83" height="360" fill="#e8eef8" />
<rect x="753" y="245" width="83" height="1" fill="#c4c4c4" />
<rect x="753" y="264" width="83" height="1" fill="#c4c4c4" />
<rect x="753" y="283" width="83" height="1" fill="#c4c4c4" />
<rect x="753" y="302" width="83" height="1" fill="#c4c4c4" />
<rect x="753" y="321" width="83" height="1" fill="#c4c4c4" />
<rect x="753" y="340" width="83" height="1" fill="#c4c4c4" />
<rect x="753" y="359" width="83" height="1" fill="#c4c4c4" />
<rect x="753" y="378" width="83" height="1" fill="#c4c4c4" />
<rect x="753" y="397" width="83" height="1" fill="#c4c4c4" />
<rect x="753" y="416" width="83" height="1" fill="#c4c4c4" />
<rect x="753" y="435" width="83" height="1" fill="#c4c4c4" />
<rect x="753" y="454" width="83" height="1" fill="#c4c4c4" />
<rect x="753" y="473" width="83" height="1" fill="#c4c4c4" />
<rect x="753" y="492" width="83" height="1" fill="#c4c4c4" />
<rect x="753" y="511" width="83" height="1" fill="#c4c4c4" />
<rect x="753" y="530" width="83" height="1" fill="#c4c4c4" />
<rect x="753" y="549" width="83" height="1" fill="#c4c4c4" />
<rect x="753" y="568" width="83" height="1" fill="#c4c4c4" />
<defs><clipPath id="cC"><rect x="261" y="188" width="284" height="420"/></clipPath></defs>
<text x="71.2" y="241" font-size="13.8" fill="#000" text-anchor="middle" id="o12" letter-spacing="-0.55">02/0 /20 8</text>
<text x="115" y="241" font-size="13.8" fill="#000" id="o13" letter-spacing="-0.35">HN/TM/C/20 8-C00 </text>
<text x="263" y="241" font-size="13.8" fill="#000" id="o14" clip-path="url(#cC)" letter-spacing="-0.42">Tạm ứng xăng dầu, phí cầu đường Tháng 0 /20 8</text>
<text x="548" y="241" font-size="13.8" fill="#000" id="o15" letter-spacing="-0.7">   </text>
<text x="597" y="241" font-size="13.8" fill="#000" id="o16" letter-spacing="-0.7"> 4 </text>
<text x="732.5" y="241" font-size="13.8" fill="#000" text-anchor="end" >-</text>
<text x="829.5" y="241" font-size="13.8" fill="#000" text-anchor="end" id="o17" letter-spacing="-0.6"> 5.000.000</text>
<text x="922.5" y="241" font-size="13.8" fill="#000" text-anchor="end" id="o18" letter-spacing="-0.6">  3.677.368</text>
<text x="986" y="241" font-size="13.8" fill="#000" text-anchor="end" >-</text>
<path d="M546 227 h5 l-5 5 z" fill="#008000" />
<path d="M595 227 h5 l-5 5 z" fill="#008000" />
<text x="71.2" y="260" font-size="13.8" fill="#000" text-anchor="middle" id="o19" letter-spacing="-0.55">08/0 /20 8</text>
<text x="115" y="260" font-size="13.8" fill="#000" id="o20" letter-spacing="-0.35">HN/TM/C/20 8-C002</text>
<text x="263" y="260" font-size="13.8" fill="#000" id="o21" clip-path="url(#cC)" letter-spacing="-0.42">Chi phí tiếp khách hàng (HĐ 47 , 927)</text>
<text x="548" y="260" font-size="13.8" fill="#000" id="o22" letter-spacing="-0.7">   </text>
<text x="597" y="260" font-size="13.8" fill="#000" id="o23" letter-spacing="-0.7">6428 </text>
<text x="732.5" y="260" font-size="13.8" fill="#000" text-anchor="end" >-</text>
<text x="829.5" y="260" font-size="13.8" fill="#000" text-anchor="end" id="o24" letter-spacing="-0.6"> .680.000</text>
<text x="922.5" y="260" font-size="13.8" fill="#000" text-anchor="end" id="o25" letter-spacing="-0.6">   .997.368</text>
<text x="986" y="260" font-size="13.8" fill="#000" text-anchor="end" >-</text>
<path d="M546 246 h5 l-5 5 z" fill="#008000" />
<path d="M595 246 h5 l-5 5 z" fill="#008000" />
<text x="71.2" y="279" font-size="13.8" fill="#000" text-anchor="middle" id="o26" letter-spacing="-0.55">08/0 /20 8</text>
<text x="115" y="279" font-size="13.8" fill="#000" id="o27" letter-spacing="-0.35">HN/TM/C/20 8-C002</text>
<text x="263" y="279" font-size="13.8" fill="#000" id="o28" clip-path="url(#cC)" letter-spacing="-0.42">Chi phí tiếp khách hàng (HĐ 47 , 927)</text>
<text x="548" y="279" font-size="13.8" fill="#000" id="o29" letter-spacing="-0.7">   </text>
<text x="597" y="279" font-size="13.8" fill="#000" id="o30" letter-spacing="-0.7">6428 </text>
<text x="732.5" y="279" font-size="13.8" fill="#000" text-anchor="end" >-</text>
<text x="829.5" y="279" font-size="13.8" fill="#000" text-anchor="end" letter-spacing="-0.6">2.982.727</text>
<text x="922.5" y="279" font-size="13.8" fill="#000" text-anchor="end" id="o31" letter-spacing="-0.6"> 09.0 4.64 </text>
<text x="986" y="279" font-size="13.8" fill="#000" text-anchor="end" >-</text>
<path d="M546 265 h5 l-5 5 z" fill="#008000" />
<path d="M595 265 h5 l-5 5 z" fill="#008000" />
<text x="71.2" y="298" font-size="13.8" fill="#000" text-anchor="middle" id="o32" letter-spacing="-0.55">08/0 /20 8</text>
<text x="115" y="298" font-size="13.8" fill="#000" id="o33" letter-spacing="-0.35">HN/TM/C/20 8-C002</text>
<text x="263" y="298" font-size="13.8" fill="#000" id="o34" clip-path="url(#cC)" letter-spacing="-0.42">Chi phí tiếp khách hàng (HĐ 47 , 927)</text>
<text x="548" y="298" font-size="13.8" fill="#000" id="o35" letter-spacing="-0.7">   </text>
<text x="597" y="298" font-size="13.8" fill="#000" id="o36" letter-spacing="-0.7"> 33 </text>
<text x="732.5" y="298" font-size="13.8" fill="#000" text-anchor="end" >-</text>
<text x="829.5" y="298" font-size="13.8" fill="#000" text-anchor="end" letter-spacing="-0.6">298.273</text>
<text x="922.5" y="298" font-size="13.8" fill="#000" text-anchor="end" id="o37" letter-spacing="-0.6"> 08.7 6.368</text>
<text x="986" y="298" font-size="13.8" fill="#000" text-anchor="end" >-</text>
<path d="M546 284 h5 l-5 5 z" fill="#008000" />
<path d="M595 284 h5 l-5 5 z" fill="#008000" />
<text x="71.2" y="317" font-size="13.8" fill="#000" text-anchor="middle" id="o38" letter-spacing="-0.55">09/0 /20 8</text>
<text x="115" y="317" font-size="13.8" fill="#000" id="o39" letter-spacing="-0.35">HN/TM/C/20 8-C003</text>
<text x="263" y="317" font-size="13.8" fill="#000" id="o40" clip-path="url(#cC)" letter-spacing="-0.42">Tiền dịch vụ vệ sinh tháng  2/20 7</text>
<text x="548" y="317" font-size="13.8" fill="#000" id="o41" letter-spacing="-0.7">   </text>
<text x="597" y="317" font-size="13.8" fill="#000" letter-spacing="-0.7">64275</text>
<text x="732.5" y="317" font-size="13.8" fill="#000" text-anchor="end" >-</text>
<text x="829.5" y="317" font-size="13.8" fill="#000" text-anchor="end" id="o42" letter-spacing="-0.6"> .700.000</text>
<text x="922.5" y="317" font-size="13.8" fill="#000" text-anchor="end" id="o43" letter-spacing="-0.6"> 07.0 6.368</text>
<text x="986" y="317" font-size="13.8" fill="#000" text-anchor="end" >-</text>
<path d="M546 303 h5 l-5 5 z" fill="#008000" />
<path d="M595 303 h5 l-5 5 z" fill="#008000" />
<text x="71.2" y="336" font-size="13.8" fill="#000" text-anchor="middle" id="o44" letter-spacing="-0.55"> 2/0 /20 8</text>
<text x="115" y="336" font-size="13.8" fill="#000" id="o45" letter-spacing="-0.35">HN/TM/C/20 8-C004</text>
<text x="263" y="336" font-size="13.8" fill="#000" id="o46" clip-path="url(#cC)" letter-spacing="-0.42">Chi phí tiền điện thoại T /20 8 Ban Lãnh Đạo</text>
<text x="548" y="336" font-size="13.8" fill="#000" id="o47" letter-spacing="-0.7">   </text>
<text x="597" y="336" font-size="13.8" fill="#000" letter-spacing="-0.7">64272</text>
<text x="732.5" y="336" font-size="13.8" fill="#000" text-anchor="end" >-</text>
<text x="829.5" y="336" font-size="13.8" fill="#000" text-anchor="end" id="o48" letter-spacing="-0.6"> .8 8. 82</text>
<text x="922.5" y="336" font-size="13.8" fill="#000" text-anchor="end" id="o49" letter-spacing="-0.6"> 05. 98. 86</text>
<text x="986" y="336" font-size="13.8" fill="#000" text-anchor="end" >-</text>
<path d="M546 322 h5 l-5 5 z" fill="#008000" />
<path d="M595 322 h5 l-5 5 z" fill="#008000" />
<text x="71.2" y="355" font-size="13.8" fill="#000" text-anchor="middle" id="o50" letter-spacing="-0.55"> 2/0 /20 8</text>
<text x="115" y="355" font-size="13.8" fill="#000" id="o51" letter-spacing="-0.35">HN/TM/C/20 8-C004</text>
<text x="263" y="355" font-size="13.8" fill="#000" id="o52" clip-path="url(#cC)" letter-spacing="-0.42">Chi phí tiền điện thoại T /20 8 CBCNV (theo danh sách)</text>
<text x="548" y="355" font-size="13.8" fill="#000" id="o53" letter-spacing="-0.7">   </text>
<text x="597" y="355" font-size="13.8" fill="#000" letter-spacing="-0.7">64272</text>
<text x="732.5" y="355" font-size="13.8" fill="#000" text-anchor="end" >-</text>
<text x="829.5" y="355" font-size="13.8" fill="#000" text-anchor="end" letter-spacing="-0.6">2.272.727</text>
<text x="922.5" y="355" font-size="13.8" fill="#000" text-anchor="end" id="o54" letter-spacing="-0.6"> 02.925.459</text>
<text x="986" y="355" font-size="13.8" fill="#000" text-anchor="end" >-</text>
<path d="M546 341 h5 l-5 5 z" fill="#008000" />
<path d="M595 341 h5 l-5 5 z" fill="#008000" />
<text x="71.2" y="374" font-size="13.8" fill="#000" text-anchor="middle" id="o55" letter-spacing="-0.55"> 2/0 /20 8</text>
<text x="115" y="374" font-size="13.8" fill="#000" id="o56" letter-spacing="-0.35">HN/TM/C/20 8-C004</text>
<text x="263" y="374" font-size="13.8" fill="#000" id="o57" clip-path="url(#cC)" letter-spacing="-0.42">Tiền điện thoại tháng  /20 8</text>
<text x="548" y="374" font-size="13.8" fill="#000" id="o58" letter-spacing="-0.7">   </text>
<text x="597" y="374" font-size="13.8" fill="#000" id="o59" letter-spacing="-0.7"> 33 </text>
<text x="732.5" y="374" font-size="13.8" fill="#000" text-anchor="end" >-</text>
<text x="829.5" y="374" font-size="13.8" fill="#000" text-anchor="end" letter-spacing="-0.6">450.000</text>
<text x="922.5" y="374" font-size="13.8" fill="#000" text-anchor="end" id="o60" letter-spacing="-0.6"> 02.475.459</text>
<text x="986" y="374" font-size="13.8" fill="#000" text-anchor="end" >-</text>
<path d="M546 360 h5 l-5 5 z" fill="#008000" />
<path d="M595 360 h5 l-5 5 z" fill="#008000" />
<text x="71.2" y="393" font-size="13.8" fill="#000" text-anchor="middle" id="o61" letter-spacing="-0.55"> 2/0 /20 8</text>
<text x="115" y="393" font-size="13.8" fill="#000" id="o62" letter-spacing="-0.35">HN/TM/C/20 8-C004</text>
<text x="263" y="393" font-size="13.8" fill="#000" clip-path="url(#cC)" letter-spacing="-0.42">Chi phí thay hộp mực cho máy in P2035</text>
<text x="548" y="393" font-size="13.8" fill="#000" id="o63" letter-spacing="-0.7">   </text>
<text x="597" y="393" font-size="13.8" fill="#000" letter-spacing="-0.7">6423</text>
<text x="732.5" y="393" font-size="13.8" fill="#000" text-anchor="end" >-</text>
<text x="829.5" y="393" font-size="13.8" fill="#000" text-anchor="end" id="o64" letter-spacing="-0.6">409.09 </text>
<text x="922.5" y="393" font-size="13.8" fill="#000" text-anchor="end" id="o65" letter-spacing="-0.6"> 02.066.368</text>
<text x="986" y="393" font-size="13.8" fill="#000" text-anchor="end" >-</text>
<path d="M546 379 h5 l-5 5 z" fill="#008000" />
<path d="M595 379 h5 l-5 5 z" fill="#008000" />
<text x="71.2" y="412" font-size="13.8" fill="#000" text-anchor="middle" id="o66" letter-spacing="-0.55"> 2/0 /20 8</text>
<text x="115" y="412" font-size="13.8" fill="#000" id="o67" letter-spacing="-0.35">HN/TM/C/20 8-C005</text>
<text x="263" y="412" font-size="13.8" fill="#000" id="o68" clip-path="url(#cC)" letter-spacing="-0.42">Chi phí tiền điện thoại tháng  2/20 7</text>
<text x="548" y="412" font-size="13.8" fill="#000" id="o69" letter-spacing="-0.7">   </text>
<text x="597" y="412" font-size="13.8" fill="#000" letter-spacing="-0.7">64272</text>
<text x="732.5" y="412" font-size="13.8" fill="#000" text-anchor="end" >-</text>
<text x="829.5" y="412" font-size="13.8" fill="#000" text-anchor="end" id="o70" letter-spacing="-0.6">5 5.3 4</text>
<text x="922.5" y="412" font-size="13.8" fill="#000" text-anchor="end" id="o71" letter-spacing="-0.6"> 0 .55 .054</text>
<text x="986" y="412" font-size="13.8" fill="#000" text-anchor="end" >-</text>
<path d="M546 398 h5 l-5 5 z" fill="#008000" />
<path d="M595 398 h5 l-5 5 z" fill="#008000" />
<text x="71.2" y="431" font-size="13.8" fill="#000" text-anchor="middle" id="o72" letter-spacing="-0.55"> 2/0 /20 8</text>
<text x="115" y="431" font-size="13.8" fill="#000" id="o73" letter-spacing="-0.35">HN/TM/C/20 8-C005</text>
<text x="263" y="431" font-size="13.8" fill="#000" id="o74" clip-path="url(#cC)" letter-spacing="-0.42">Chi phí tiền điện thoại tháng  2/20 7</text>
<text x="548" y="431" font-size="13.8" fill="#000" id="o75" letter-spacing="-0.7">   </text>
<text x="597" y="431" font-size="13.8" fill="#000" id="o76" letter-spacing="-0.7"> 33 </text>
<text x="732.5" y="431" font-size="13.8" fill="#000" text-anchor="end" >-</text>
<text x="829.5" y="431" font-size="13.8" fill="#000" text-anchor="end" id="o77" letter-spacing="-0.6">5 .53 </text>
<text x="922.5" y="431" font-size="13.8" fill="#000" text-anchor="end" id="o78" letter-spacing="-0.6"> 0 .499.523</text>
<text x="986" y="431" font-size="13.8" fill="#000" text-anchor="end" >-</text>
<path d="M546 417 h5 l-5 5 z" fill="#008000" />
<path d="M595 417 h5 l-5 5 z" fill="#008000" />
<text x="71.2" y="450" font-size="13.8" fill="#000" text-anchor="middle" id="o79" letter-spacing="-0.55"> 2/0 /20 8</text>
<text x="115" y="450" font-size="13.8" fill="#000" id="o80" letter-spacing="-0.35">HN/TM/C/20 8-C006</text>
<text x="263" y="450" font-size="13.8" fill="#000" clip-path="url(#cC)" letter-spacing="-0.42">Chi phí tiếp khách hàng</text>
<text x="548" y="450" font-size="13.8" fill="#000" id="o81" letter-spacing="-0.7">   </text>
<text x="597" y="450" font-size="13.8" fill="#000" id="o82" letter-spacing="-0.7">6428 </text>
<text x="732.5" y="450" font-size="13.8" fill="#000" text-anchor="end" >-</text>
<text x="829.5" y="450" font-size="13.8" fill="#000" text-anchor="end" id="o83" letter-spacing="-0.6"> 74.709</text>
<text x="922.5" y="450" font-size="13.8" fill="#000" text-anchor="end" id="o84" letter-spacing="-0.6"> 0 .324.8 4</text>
<text x="986" y="450" font-size="13.8" fill="#000" text-anchor="end" >-</text>
<path d="M546 436 h5 l-5 5 z" fill="#008000" />
<path d="M595 436 h5 l-5 5 z" fill="#008000" />
<text x="71.2" y="469" font-size="13.8" fill="#000" text-anchor="middle" id="o85" letter-spacing="-0.55"> 2/0 /20 8</text>
<text x="115" y="469" font-size="13.8" fill="#000" id="o86" letter-spacing="-0.35">HN/TM/C/20 8-C006</text>
<text x="263" y="469" font-size="13.8" fill="#000" clip-path="url(#cC)" letter-spacing="-0.42">Chi phí tiếp khách hàng</text>
<text x="548" y="469" font-size="13.8" fill="#000" id="o87" letter-spacing="-0.7">   </text>
<text x="597" y="469" font-size="13.8" fill="#000" id="o88" letter-spacing="-0.7">6428 </text>
<text x="732.5" y="469" font-size="13.8" fill="#000" text-anchor="end" >-</text>
<text x="829.5" y="469" font-size="13.8" fill="#000" text-anchor="end" letter-spacing="-0.6">64.953</text>
<text x="922.5" y="469" font-size="13.8" fill="#000" text-anchor="end" id="o89" letter-spacing="-0.6"> 0 .259.86 </text>
<text x="986" y="469" font-size="13.8" fill="#000" text-anchor="end" >-</text>
<path d="M546 455 h5 l-5 5 z" fill="#008000" />
<path d="M595 455 h5 l-5 5 z" fill="#008000" />
<text x="71.2" y="488" font-size="13.8" fill="#000" text-anchor="middle" id="o90" letter-spacing="-0.55"> 2/0 /20 8</text>
<text x="115" y="488" font-size="13.8" fill="#000" id="o91" letter-spacing="-0.35">HN/TM/C/20 8-C006</text>
<text x="263" y="488" font-size="13.8" fill="#000" clip-path="url(#cC)" letter-spacing="-0.42">Chi phí tiếp khách hàng</text>
<text x="548" y="488" font-size="13.8" fill="#000" id="o92" letter-spacing="-0.7">   </text>
<text x="597" y="488" font-size="13.8" fill="#000" id="o93" letter-spacing="-0.7">6428 </text>
<text x="732.5" y="488" font-size="13.8" fill="#000" text-anchor="end" >-</text>
<text x="829.5" y="488" font-size="13.8" fill="#000" text-anchor="end" id="o94" letter-spacing="-0.6"> 60. 82</text>
<text x="922.5" y="488" font-size="13.8" fill="#000" text-anchor="end" id="o95" letter-spacing="-0.6"> 0 .099.679</text>
<text x="986" y="488" font-size="13.8" fill="#000" text-anchor="end" >-</text>
<path d="M546 474 h5 l-5 5 z" fill="#008000" />
<path d="M595 474 h5 l-5 5 z" fill="#008000" />
<text x="71.2" y="507" font-size="13.8" fill="#000" text-anchor="middle" id="o96" letter-spacing="-0.55"> 2/0 /20 8</text>
<text x="115" y="507" font-size="13.8" fill="#000" id="o97" letter-spacing="-0.35">HN/TM/C/20 8-C006</text>
<text x="263" y="507" font-size="13.8" fill="#000" clip-path="url(#cC)" letter-spacing="-0.42">Chi phí tiếp khách hàng</text>
<text x="548" y="507" font-size="13.8" fill="#000" id="o98" letter-spacing="-0.7">   </text>
<text x="597" y="507" font-size="13.8" fill="#000" id="o99" letter-spacing="-0.7">6428 </text>
<text x="732.5" y="507" font-size="13.8" fill="#000" text-anchor="end" >-</text>
<text x="829.5" y="507" font-size="13.8" fill="#000" text-anchor="end" id="o100" letter-spacing="-0.6"> 76.200</text>
<text x="922.5" y="507" font-size="13.8" fill="#000" text-anchor="end" id="o101" letter-spacing="-0.6"> 00.923.479</text>
<text x="986" y="507" font-size="13.8" fill="#000" text-anchor="end" >-</text>
<path d="M546 493 h5 l-5 5 z" fill="#008000" />
<path d="M595 493 h5 l-5 5 z" fill="#008000" />
<text x="71.2" y="526" font-size="13.8" fill="#000" text-anchor="middle" id="o102" letter-spacing="-0.55"> 2/0 /20 8</text>
<text x="115" y="526" font-size="13.8" fill="#000" id="o103" letter-spacing="-0.35">HN/TM/C/20 8-C006</text>
<text x="263" y="526" font-size="13.8" fill="#000" clip-path="url(#cC)" letter-spacing="-0.42">Chi phí tiếp khách hàng</text>
<text x="548" y="526" font-size="13.8" fill="#000" id="o104" letter-spacing="-0.7">   </text>
<text x="597" y="526" font-size="13.8" fill="#000" id="o105" letter-spacing="-0.7"> 33 </text>
<text x="732.5" y="526" font-size="13.8" fill="#000" text-anchor="end" >-</text>
<text x="829.5" y="526" font-size="13.8" fill="#000" text-anchor="end" id="o106" letter-spacing="-0.6">28.00 </text>
<text x="922.5" y="526" font-size="13.8" fill="#000" text-anchor="end" id="o107" letter-spacing="-0.6"> 00.895.478</text>
<text x="986" y="526" font-size="13.8" fill="#000" text-anchor="end" >-</text>
<path d="M546 512 h5 l-5 5 z" fill="#008000" />
<path d="M595 512 h5 l-5 5 z" fill="#008000" />
<text x="71.2" y="545" font-size="13.8" fill="#000" text-anchor="middle" id="o108" letter-spacing="-0.55"> 7/0 /20 8</text>
<text x="115" y="545" font-size="13.8" fill="#000" id="o109" letter-spacing="-0.35">HN/TM/C/20 8-C007</text>
<text x="263" y="545" font-size="13.8" fill="#000" clip-path="url(#cC)" letter-spacing="-0.42">Chi phí mua hoa quả tiếp khách</text>
<text x="548" y="545" font-size="13.8" fill="#000" id="o110" letter-spacing="-0.7">   </text>
<text x="597" y="545" font-size="13.8" fill="#000" id="o111" letter-spacing="-0.7">6428 </text>
<text x="732.5" y="545" font-size="13.8" fill="#000" text-anchor="end" >-</text>
<text x="829.5" y="545" font-size="13.8" fill="#000" text-anchor="end" id="o112" letter-spacing="-0.6">73.7 4</text>
<text x="922.5" y="545" font-size="13.8" fill="#000" text-anchor="end" id="o113" letter-spacing="-0.6"> 00.82 .764</text>
<text x="986" y="545" font-size="13.8" fill="#000" text-anchor="end" >-</text>
<path d="M546 531 h5 l-5 5 z" fill="#008000" />
<path d="M595 531 h5 l-5 5 z" fill="#008000" />
<text x="71.2" y="564" font-size="13.8" fill="#000" text-anchor="middle" id="o114" letter-spacing="-0.55"> 7/0 /20 8</text>
<text x="115" y="564" font-size="13.8" fill="#000" id="o115" letter-spacing="-0.35">HN/TM/C/20 8-C007</text>
<text x="263" y="564" font-size="13.8" fill="#000" clip-path="url(#cC)" letter-spacing="-0.42">Chi phí mua hoa quả tiếp khách</text>
<text x="548" y="564" font-size="13.8" fill="#000" id="o116" letter-spacing="-0.7">   </text>
<text x="597" y="564" font-size="13.8" fill="#000" id="o117" letter-spacing="-0.7"> 33 </text>
<text x="732.5" y="564" font-size="13.8" fill="#000" text-anchor="end" >-</text>
<text x="829.5" y="564" font-size="13.8" fill="#000" text-anchor="end" letter-spacing="-0.6">3.686</text>
<text x="922.5" y="564" font-size="13.8" fill="#000" text-anchor="end" id="o118" letter-spacing="-0.6"> 00.8 8.078</text>
<text x="986" y="564" font-size="13.8" fill="#000" text-anchor="end" >-</text>
<path d="M546 550 h5 l-5 5 z" fill="#008000" />
<path d="M595 550 h5 l-5 5 z" fill="#008000" />
<text x="71.2" y="583" font-size="13.8" fill="#000" text-anchor="middle" id="o119" letter-spacing="-0.55"> 7/0 /20 8</text>
<text x="115" y="583" font-size="13.8" fill="#000" id="o120" letter-spacing="-0.35">HN/TM/C/20 8-C007</text>
<text x="263" y="583" font-size="13.8" fill="#000" clip-path="url(#cC)" letter-spacing="-0.42">Chi phí mua đồ dùng VP</text>
<text x="548" y="583" font-size="13.8" fill="#000" id="o121" letter-spacing="-0.7">   </text>
<text x="597" y="583" font-size="13.8" fill="#000" letter-spacing="-0.7">6423</text>
<text x="732.5" y="583" font-size="13.8" fill="#000" text-anchor="end" >-</text>
<text x="829.5" y="583" font-size="13.8" fill="#000" text-anchor="end" id="o122" letter-spacing="-0.6">29 .8 8</text>
<text x="922.5" y="583" font-size="13.8" fill="#000" text-anchor="end" id="o123" letter-spacing="-0.6"> 00.526.260</text>
<text x="986" y="583" font-size="13.8" fill="#000" text-anchor="end" >-</text>
<path d="M546 569 h5 l-5 5 z" fill="#008000" />
<path d="M595 569 h5 l-5 5 z" fill="#008000" />
<text x="70.5" y="203.5" font-size="13.8" fill="#000" text-anchor="middle" font-weight="bold" textLength="36.8" lengthAdjust="spacingAndGlyphs" >Ngày</text>
<text x="70.5" y="219.5" font-size="13.8" fill="#000" text-anchor="middle" font-weight="bold" textLength="56" lengthAdjust="spacingAndGlyphs" >chứng từ</text>
<text x="186.5" y="211.5" font-size="13.8" fill="#000" text-anchor="middle" font-weight="bold" textLength="80.5" lengthAdjust="spacingAndGlyphs" >Số chứng từ</text>
<text x="403.5" y="211.5" font-size="13.8" fill="#000" text-anchor="middle" font-weight="bold" textLength="62.9" lengthAdjust="spacingAndGlyphs" >Diễn giải</text>
<text x="571.5" y="203.5" font-size="13.8" fill="#000" text-anchor="middle" font-weight="bold" textLength="22.6" lengthAdjust="spacingAndGlyphs" >Tài</text>
<text x="570.5" y="219.5" font-size="13.8" fill="#000" text-anchor="middle" font-weight="bold" >khoản</text>
<text x="629.5" y="203.5" font-size="13.8" fill="#000" text-anchor="middle" font-weight="bold" textLength="44" lengthAdjust="spacingAndGlyphs" >TK đối</text>
<text x="629" y="219.5" font-size="13.8" fill="#000" text-anchor="middle" font-weight="bold" >ứng</text>
<text x="708" y="203.5" font-size="13.8" fill="#000" text-anchor="middle" font-weight="bold" textLength="64.2" lengthAdjust="spacingAndGlyphs" >Phát sinh</text>
<text x="708.5" y="219.5" font-size="13.8" fill="#000" text-anchor="middle" font-weight="bold" textLength="20.8" lengthAdjust="spacingAndGlyphs" >Nợ</text>
<text x="794.5" y="203.5" font-size="13.8" fill="#000" text-anchor="middle" font-weight="bold" textLength="65" lengthAdjust="spacingAndGlyphs" >Phát sinh</text>
<text x="795" y="219.5" font-size="13.8" fill="#000" text-anchor="middle" font-weight="bold" textLength="19.6" lengthAdjust="spacingAndGlyphs" >Có</text>
<text x="883" y="211.5" font-size="13.8" fill="#000" text-anchor="middle" font-weight="bold" textLength="43.7" lengthAdjust="spacingAndGlyphs" >Dư Nợ</text>
<text x="968.5" y="211.5" font-size="13.8" fill="#000" text-anchor="middle" font-weight="bold" textLength="43" lengthAdjust="spacingAndGlyphs" >Dư Có</text>
<rect x="95" y="208" width="17" height="17" fill="#9fb6db" />
<rect x="96" y="209" width="15" height="15" fill="url(#fb)"/>
<path d="M99.5 215 h7.6 l-3.8 4.2 z" fill="#5a5a5a" />
<rect x="243" y="208" width="17" height="17" fill="#9fb6db" />
<rect x="244" y="209" width="15" height="15" fill="url(#fb)"/>
<path d="M247.5 215 h7.6 l-3.8 4.2 z" fill="#5a5a5a" />
<rect x="528" y="208" width="17" height="17" fill="#9fb6db" />
<rect x="529" y="209" width="15" height="15" fill="url(#fb)"/>
<path d="M532.5 215 h7.6 l-3.8 4.2 z" fill="#5a5a5a" />
<rect x="577" y="208" width="17" height="17" fill="#9fb6db" />
<rect x="578" y="209" width="15" height="15" fill="url(#fb)"/>
<path d="M581.5 215 h7.6 l-3.8 4.2 z" fill="#5a5a5a" />
<rect x="646" y="208" width="17" height="17" fill="#9fb6db" />
<rect x="647" y="209" width="15" height="15" fill="url(#fb)"/>
<path d="M650.5 215 h7.6 l-3.8 4.2 z" fill="#5a5a5a" />
<rect x="735" y="208" width="17" height="17" fill="#9fb6db" />
<rect x="736" y="209" width="15" height="15" fill="url(#fb)"/>
<path d="M739.5 215 h7.6 l-3.8 4.2 z" fill="#5a5a5a" />
<rect x="819" y="208" width="17" height="17" fill="#9fb6db" />
<rect x="820" y="209" width="15" height="15" fill="url(#fb)"/>
<path d="M823.5 215 h7.6 l-3.8 4.2 z" fill="#5a5a5a" />
<rect x="912" y="208" width="17" height="17" fill="#9fb6db" />
<rect x="913" y="209" width="15" height="15" fill="url(#fb)"/>
<path d="M916.5 215 h7.6 l-3.8 4.2 z" fill="#5a5a5a" />
<rect x="989" y="208" width="17" height="17" fill="#9fb6db" />
<rect x="990" y="209" width="15" height="15" fill="url(#fb)"/>
<path d="M993.5 215 h7.6 l-3.8 4.2 z" fill="#5a5a5a" />
<rect x="751" y="225" width="87" height="1" fill="#3c6fd0" />
<rect x="751" y="225" width="1" height="363" fill="#3c6fd0" />
<rect x="837" y="225" width="1" height="363" fill="#3c6fd0" />
<path d="M752.5 227 V587" fill="none" stroke="#1e6b35" stroke-width="2" stroke-dasharray="7 2"/>
<path d="M835.5 227 V587" fill="none" stroke="#1e6b35" stroke-width="2" stroke-dasharray="7 2"/>
<path d="M753 227.5 H836" fill="none" stroke="#1e6b35" stroke-width="1" stroke-dasharray="7 2"/>
<path d="M751 587 H837" fill="none" stroke="#1e6b35" stroke-width="2" stroke-dasharray="7 2"/>
<rect x="749" y="223" width="7" height="7" fill="#ffffff" />
<rect x="750" y="224" width="5" height="5" fill="#3c6fd0" />
<rect x="833" y="223" width="7" height="7" fill="#ffffff" />
<rect x="834" y="224" width="5" height="5" fill="#3c6fd0" />
<rect x="749" y="584" width="7" height="7" fill="#ffffff" />
<rect x="750" y="585" width="5" height="5" fill="#3c6fd0" />
<rect x="833" y="584" width="7" height="7" fill="#ffffff" />
<rect x="834" y="585" width="5" height="5" fill="#3c6fd0" />
<rect x="751" y="589" width="2" height="19" fill="#217346" />
<rect x="751" y="606" width="83" height="2" fill="#217346" />
<rect x="753" y="588" width="83" height="18" fill="#ffffff" />
<rect x="800" y="588" width="50" height="18" fill="#c8c8c8" />
<rect x="834" y="606" width="5" height="4" fill="#217346" />
<text x="755" y="602.5" font-size="14.67" fill="#000" >=SUM(</text>
<text x="800.5" y="602.5" font-size="14.67" fill="#2a52d6" >G2:G20</text>
<rect x="850" y="589" width="1" height="16" fill="#000" />
<text x="850.5" y="602.5" font-size="14.67" fill="#000" >)</text>
<rect x="764" y="609" width="174" height="18" fill="#c0c0c0" />
<rect x="765" y="610" width="172" height="16" fill="#ffffff" />
<text x="770" y="621.5" font-size="12" fill="#6a6a6a" textLength="161" lengthAdjust="spacingAndGlyphs">SUM(<tspan font-weight="bold">number1</tspan>; [number2]; ...)</text>
<path d="M15.08 222.00 L13.95 222.00 L13.95 213.34 L13.37 213.80 L12.61 214.30 L11.92 214.64 L11.30 214.87 L11.30 213.76 L12.35 213.18 L13.18 212.42 L13.99 211.50 L14.60 210.76 L15.08 210.76 Z" fill="#262626" />
<path d="M10.72 394.00 L9.59 394.00 L9.59 385.34 L9.01 385.80 L8.25 386.30 L7.56 386.64 L6.94 386.87 L6.94 385.76 L7.99 385.18 L8.82 384.42 L9.63 383.50 L10.24 382.76 L10.72 382.76 Z" fill="#262626" />
<path d="M10.72 413.00 L9.59 413.00 L9.59 404.34 L9.01 404.80 L8.25 405.30 L7.56 405.64 L6.94 405.87 L6.94 404.76 L7.99 404.18 L8.82 403.42 L9.63 402.50 L10.24 401.76 L10.72 401.76 Z M19.44 413.00 L18.31 413.00 L18.31 404.34 L17.73 404.80 L16.97 405.30 L16.28 405.64 L15.66 405.87 L15.66 404.76 L16.70 404.18 L17.54 403.42 L18.35 402.50 L18.96 401.76 L19.44 401.76 Z" fill="#262626" />
<path d="M10.72 432.00 L9.59 432.00 L9.59 423.34 L9.01 423.80 L8.25 424.30 L7.56 424.64 L6.94 424.87 L6.94 423.76 L7.99 423.18 L8.82 422.42 L9.63 421.50 L10.24 420.76 L10.72 420.76 Z" fill="#262626" />
<path d="M10.72 451.00 L9.59 451.00 L9.59 442.34 L9.01 442.80 L8.25 443.30 L7.56 443.64 L6.94 443.87 L6.94 442.76 L7.99 442.18 L8.82 441.42 L9.63 440.50 L10.24 439.76 L10.72 439.76 Z" fill="#262626" />
<path d="M10.72 470.00 L9.59 470.00 L9.59 461.34 L9.01 461.80 L8.25 462.30 L7.56 462.64 L6.94 462.87 L6.94 461.76 L7.99 461.18 L8.82 460.42 L9.63 459.50 L10.24 458.76 L10.72 458.76 Z" fill="#262626" />
<path d="M10.72 489.00 L9.59 489.00 L9.59 480.34 L9.01 480.80 L8.25 481.30 L7.56 481.64 L6.94 481.87 L6.94 480.76 L7.99 480.18 L8.82 479.42 L9.63 478.50 L10.24 477.76 L10.72 477.76 Z" fill="#262626" />
<path d="M10.72 508.00 L9.59 508.00 L9.59 499.34 L9.01 499.80 L8.25 500.30 L7.56 500.64 L6.94 500.87 L6.94 499.76 L7.99 499.18 L8.82 498.42 L9.63 497.50 L10.24 496.76 L10.72 496.76 Z" fill="#262626" />
<path d="M10.72 527.00 L9.59 527.00 L9.59 518.34 L9.01 518.80 L8.25 519.30 L7.56 519.64 L6.94 519.87 L6.94 518.76 L7.99 518.18 L8.82 517.42 L9.63 516.50 L10.24 515.76 L10.72 515.76 Z" fill="#262626" />
<path d="M10.72 546.00 L9.59 546.00 L9.59 537.34 L9.01 537.80 L8.25 538.30 L7.56 538.64 L6.94 538.87 L6.94 537.76 L7.99 537.18 L8.82 536.42 L9.63 535.50 L10.24 534.76 L10.72 534.76 Z" fill="#262626" />
<path d="M10.72 565.00 L9.59 565.00 L9.59 556.34 L9.01 556.80 L8.25 557.30 L7.56 557.64 L6.94 557.87 L6.94 556.76 L7.99 556.18 L8.82 555.42 L9.63 554.50 L10.24 553.76 L10.72 553.76 Z" fill="#262626" />
<path d="M19.44 603.00 L18.31 603.00 L18.31 594.34 L17.73 594.80 L16.97 595.30 L16.28 595.64 L15.66 595.87 L15.66 594.76 L16.70 594.18 L17.54 593.42 L18.35 592.50 L18.96 591.76 L19.44 591.76 Z" fill="#217346" />
<path d="M69.20 241.00 L68.20 241.00 L68.20 233.39 L67.70 233.79 L67.02 234.23 L66.42 234.53 L65.88 234.73 L65.88 233.76 L66.80 233.25 L67.53 232.58 L68.24 231.77 L68.78 231.12 L69.20 231.12 Z M93.86 241.00 L92.86 241.00 L92.86 233.39 L92.35 233.79 L91.68 234.23 L91.07 234.53 L90.53 234.73 L90.53 233.76 L91.45 233.25 L92.19 232.58 L92.90 231.77 L93.43 231.12 L93.86 231.12 Z" fill="#000" />
<path d="M193.30 241.00 L192.30 241.00 L192.30 233.39 L191.79 233.79 L191.12 234.23 L190.51 234.53 L189.98 234.73 L189.98 233.76 L190.89 233.25 L191.63 232.58 L192.34 231.77 L192.87 231.12 L193.30 231.12 Z M236.44 241.00 L235.44 241.00 L235.44 233.39 L234.94 233.79 L234.26 234.23 L233.66 234.53 L233.12 234.73 L233.12 233.76 L234.03 233.25 L234.77 232.58 L235.48 231.77 L236.01 231.12 L236.44 231.12 Z" fill="#000" />
<path d="M520.89 241.00 L519.89 241.00 L519.89 233.39 L519.39 233.79 L518.71 234.23 L518.11 234.53 L517.57 234.73 L517.57 233.76 L518.49 233.25 L519.22 232.58 L519.93 231.77 L520.47 231.12 L520.89 231.12 Z M546.06 241.00 L545.07 241.00 L545.07 233.39 L544.56 233.79 L543.89 234.23 L543.28 234.53 L542.74 234.73 L542.74 233.76 L543.66 233.25 L544.39 232.58 L545.11 231.77 L545.64 231.12 L546.06 231.12 Z" fill="#000" clip-path="url(#cC)"/>
<path d="M553.14 241.00 L552.14 241.00 L552.14 233.39 L551.64 233.79 L550.96 234.23 L550.36 234.53 L549.82 234.73 L549.82 233.76 L550.74 233.25 L551.47 232.58 L552.18 231.77 L552.72 231.12 L553.14 231.12 Z M560.11 241.00 L559.11 241.00 L559.11 233.39 L558.61 233.79 L557.93 234.23 L557.33 234.53 L556.79 234.73 L556.79 233.76 L557.70 233.25 L558.44 232.58 L559.15 231.77 L559.69 231.12 L560.11 231.12 Z M567.08 241.00 L566.08 241.00 L566.08 233.39 L565.58 233.79 L564.90 234.23 L564.30 234.53 L563.76 234.73 L563.76 233.76 L564.67 233.25 L565.41 232.58 L566.12 231.77 L566.65 231.12 L567.08 231.12 Z" fill="#000" />
<path d="M602.14 241.00 L601.14 241.00 L601.14 233.39 L600.64 233.79 L599.96 234.23 L599.36 234.53 L598.82 234.73 L598.82 233.76 L599.74 233.25 L600.47 232.58 L601.18 231.77 L601.72 231.12 L602.14 231.12 Z M616.08 241.00 L615.08 241.00 L615.08 233.39 L614.58 233.79 L613.90 234.23 L613.30 234.53 L612.76 234.73 L612.76 233.76 L613.67 233.25 L614.41 232.58 L615.12 231.77 L615.65 231.12 L616.08 231.12 Z" fill="#000" />
<path d="M771.58 241.00 L770.58 241.00 L770.58 233.39 L770.08 233.79 L769.40 234.23 L768.80 234.53 L768.26 234.73 L768.26 233.76 L769.17 233.25 L769.91 232.58 L770.62 231.77 L771.15 231.12 L771.58 231.12 Z" fill="#000" />
<path d="M857.50 241.00 L856.50 241.00 L856.50 233.39 L856.00 233.79 L855.32 234.23 L854.72 234.53 L854.18 234.73 L854.18 233.76 L855.10 233.25 L855.83 232.58 L856.54 231.77 L857.08 231.12 L857.50 231.12 Z M864.56 241.00 L863.57 241.00 L863.57 233.39 L863.06 233.79 L862.39 234.23 L861.78 234.53 L861.24 234.73 L861.24 233.76 L862.16 233.25 L862.89 232.58 L863.61 231.77 L864.14 231.12 L864.56 231.12 Z" fill="#000" />
<path d="M69.20 260.00 L68.20 260.00 L68.20 252.39 L67.70 252.79 L67.02 253.23 L66.42 253.53 L65.88 253.73 L65.88 252.76 L66.80 252.25 L67.53 251.58 L68.24 250.77 L68.78 250.12 L69.20 250.12 Z M93.86 260.00 L92.86 260.00 L92.86 252.39 L92.35 252.79 L91.68 253.23 L91.07 253.53 L90.53 253.73 L90.53 252.76 L91.45 252.25 L92.19 251.58 L92.90 250.77 L93.43 250.12 L93.86 250.12 Z" fill="#000" />
<path d="M193.30 260.00 L192.30 260.00 L192.30 252.39 L191.79 252.79 L191.12 253.23 L190.51 253.53 L189.98 253.73 L189.98 252.76 L190.89 252.25 L191.63 251.58 L192.34 250.77 L192.87 250.12 L193.30 250.12 Z" fill="#000" />
<path d="M448.03 260.00 L447.03 260.00 L447.03 252.39 L446.53 252.79 L445.86 253.23 L445.25 253.53 L444.71 253.73 L444.71 252.76 L445.63 252.25 L446.36 251.58 L447.08 250.77 L447.61 250.12 L448.03 250.12 Z" fill="#000" clip-path="url(#cC)"/>
<path d="M553.14 260.00 L552.14 260.00 L552.14 252.39 L551.64 252.79 L550.96 253.23 L550.36 253.53 L549.82 253.73 L549.82 252.76 L550.74 252.25 L551.47 251.58 L552.18 250.77 L552.72 250.12 L553.14 250.12 Z M560.11 260.00 L559.11 260.00 L559.11 252.39 L558.61 252.79 L557.93 253.23 L557.33 253.53 L556.79 253.73 L556.79 252.76 L557.70 252.25 L558.44 251.58 L559.15 250.77 L559.69 250.12 L560.11 250.12 Z M567.08 260.00 L566.08 260.00 L566.08 252.39 L565.58 252.79 L564.90 253.23 L564.30 253.53 L563.76 253.73 L563.76 252.76 L564.67 252.25 L565.41 251.58 L566.12 250.77 L566.65 250.12 L567.08 250.12 Z" fill="#000" />
<path d="M630.03 260.00 L629.03 260.00 L629.03 252.39 L628.53 252.79 L627.86 253.23 L627.25 253.53 L626.71 253.73 L626.71 252.76 L627.63 252.25 L628.36 251.58 L629.08 250.77 L629.61 250.12 L630.03 250.12 Z" fill="#000" />
<path d="M778.66 260.00 L777.66 260.00 L777.66 252.39 L777.15 252.79 L776.48 253.23 L775.87 253.53 L775.33 253.73 L775.33 252.76 L776.25 252.25 L776.99 251.58 L777.70 250.77 L778.23 250.12 L778.66 250.12 Z" fill="#000" />
<path d="M857.50 260.00 L856.50 260.00 L856.50 252.39 L856.00 252.79 L855.32 253.23 L854.72 253.53 L854.18 253.73 L854.18 252.76 L855.10 252.25 L855.83 251.58 L856.54 250.77 L857.08 250.12 L857.50 250.12 Z M864.56 260.00 L863.57 260.00 L863.57 252.39 L863.06 252.79 L862.39 253.23 L861.78 253.53 L861.24 253.73 L861.24 252.76 L862.16 252.25 L862.89 251.58 L863.61 250.77 L864.14 250.12 L864.56 250.12 Z M871.64 260.00 L870.64 260.00 L870.64 252.39 L870.14 252.79 L869.46 253.23 L868.86 253.53 L868.32 253.73 L868.32 252.76 L869.24 252.25 L869.97 251.58 L870.68 250.77 L871.22 250.12 L871.64 250.12 Z" fill="#000" />
<path d="M69.20 279.00 L68.20 279.00 L68.20 271.39 L67.70 271.79 L67.02 272.23 L66.42 272.53 L65.88 272.73 L65.88 271.76 L66.80 271.25 L67.53 270.58 L68.24 269.77 L68.78 269.12 L69.20 269.12 Z M93.86 279.00 L92.86 279.00 L92.86 271.39 L92.35 271.79 L91.68 272.23 L91.07 272.53 L90.53 272.73 L90.53 271.76 L91.45 271.25 L92.19 270.58 L92.90 269.77 L93.43 269.12 L93.86 269.12 Z" fill="#000" />
<path d="M193.30 279.00 L192.30 279.00 L192.30 271.39 L191.79 271.79 L191.12 272.23 L190.51 272.53 L189.98 272.73 L189.98 271.76 L190.89 271.25 L191.63 270.58 L192.34 269.77 L192.87 269.12 L193.30 269.12 Z" fill="#000" />
<path d="M448.03 279.00 L447.03 279.00 L447.03 271.39 L446.53 271.79 L445.86 272.23 L445.25 272.53 L444.71 272.73 L444.71 271.76 L445.63 271.25 L446.36 270.58 L447.08 269.77 L447.61 269.12 L448.03 269.12 Z" fill="#000" clip-path="url(#cC)"/>
<path d="M553.14 279.00 L552.14 279.00 L552.14 271.39 L551.64 271.79 L550.96 272.23 L550.36 272.53 L549.82 272.73 L549.82 271.76 L550.74 271.25 L551.47 270.58 L552.18 269.77 L552.72 269.12 L553.14 269.12 Z M560.11 279.00 L559.11 279.00 L559.11 271.39 L558.61 271.79 L557.93 272.23 L557.33 272.53 L556.79 272.73 L556.79 271.76 L557.70 271.25 L558.44 270.58 L559.15 269.77 L559.69 269.12 L560.11 269.12 Z M567.08 279.00 L566.08 279.00 L566.08 271.39 L565.58 271.79 L564.90 272.23 L564.30 272.53 L563.76 272.73 L563.76 271.76 L564.67 271.25 L565.41 270.58 L566.12 269.77 L566.65 269.12 L567.08 269.12 Z" fill="#000" />
<path d="M630.03 279.00 L629.03 279.00 L629.03 271.39 L628.53 271.79 L627.86 272.23 L627.25 272.53 L626.71 272.73 L626.71 271.76 L627.63 271.25 L628.36 270.58 L629.08 269.77 L629.61 269.12 L630.03 269.12 Z" fill="#000" />
<path d="M857.50 279.00 L856.50 279.00 L856.50 271.39 L856.00 271.79 L855.32 272.23 L854.72 272.53 L854.18 272.73 L854.18 271.76 L855.10 271.25 L855.83 270.58 L856.54 269.77 L857.08 269.12 L857.50 269.12 Z M889.02 279.00 L888.02 279.00 L888.02 271.39 L887.51 271.79 L886.84 272.23 L886.23 272.53 L885.69 272.73 L885.69 271.76 L886.61 271.25 L887.35 270.58 L888.06 269.77 L888.59 269.12 L889.02 269.12 Z M920.55 279.00 L919.55 279.00 L919.55 271.39 L919.04 271.79 L918.37 272.23 L917.76 272.53 L917.23 272.73 L917.23 271.76 L918.14 271.25 L918.88 270.58 L919.59 269.77 L920.12 269.12 L920.55 269.12 Z" fill="#000" />
<path d="M69.20 298.00 L68.20 298.00 L68.20 290.39 L67.70 290.79 L67.02 291.23 L66.42 291.53 L65.88 291.73 L65.88 290.76 L66.80 290.25 L67.53 289.58 L68.24 288.77 L68.78 288.12 L69.20 288.12 Z M93.86 298.00 L92.86 298.00 L92.86 290.39 L92.35 290.79 L91.68 291.23 L91.07 291.53 L90.53 291.73 L90.53 290.76 L91.45 290.25 L92.19 289.58 L92.90 288.77 L93.43 288.12 L93.86 288.12 Z" fill="#000" />
<path d="M193.30 298.00 L192.30 298.00 L192.30 290.39 L191.79 290.79 L191.12 291.23 L190.51 291.53 L189.98 291.73 L189.98 290.76 L190.89 290.25 L191.63 289.58 L192.34 288.77 L192.87 288.12 L193.30 288.12 Z" fill="#000" />
<path d="M448.03 298.00 L447.03 298.00 L447.03 290.39 L446.53 290.79 L445.86 291.23 L445.25 291.53 L444.71 291.73 L444.71 290.76 L445.63 290.25 L446.36 289.58 L447.08 288.77 L447.61 288.12 L448.03 288.12 Z" fill="#000" clip-path="url(#cC)"/>
<path d="M553.14 298.00 L552.14 298.00 L552.14 290.39 L551.64 290.79 L550.96 291.23 L550.36 291.53 L549.82 291.73 L549.82 290.76 L550.74 290.25 L551.47 289.58 L552.18 288.77 L552.72 288.12 L553.14 288.12 Z M560.11 298.00 L559.11 298.00 L559.11 290.39 L558.61 290.79 L557.93 291.23 L557.33 291.53 L556.79 291.73 L556.79 290.76 L557.70 290.25 L558.44 289.58 L559.15 288.77 L559.69 288.12 L560.11 288.12 Z M567.08 298.00 L566.08 298.00 L566.08 290.39 L565.58 290.79 L564.90 291.23 L564.30 291.53 L563.76 291.73 L563.76 290.76 L564.67 290.25 L565.41 289.58 L566.12 288.77 L566.65 288.12 L567.08 288.12 Z" fill="#000" />
<path d="M602.14 298.00 L601.14 298.00 L601.14 290.39 L600.64 290.79 L599.96 291.23 L599.36 291.53 L598.82 291.73 L598.82 290.76 L599.74 290.25 L600.47 289.58 L601.18 288.77 L601.72 288.12 L602.14 288.12 Z M623.05 298.00 L622.05 298.00 L622.05 290.39 L621.54 290.79 L620.87 291.23 L620.26 291.53 L619.73 291.73 L619.73 290.76 L620.64 290.25 L621.38 289.58 L622.09 288.77 L622.62 288.12 L623.05 288.12 Z" fill="#000" />
<path d="M857.50 298.00 L856.50 298.00 L856.50 290.39 L856.00 290.79 L855.32 291.23 L854.72 291.53 L854.18 291.73 L854.18 290.76 L855.10 290.25 L855.83 289.58 L856.54 288.77 L857.08 288.12 L857.50 288.12 Z M889.02 298.00 L888.02 298.00 L888.02 290.39 L887.51 290.79 L886.84 291.23 L886.23 291.53 L885.69 291.73 L885.69 290.76 L886.61 290.25 L887.35 289.58 L888.06 288.77 L888.59 288.12 L889.02 288.12 Z" fill="#000" />
<path d="M69.20 317.00 L68.20 317.00 L68.20 309.39 L67.70 309.79 L67.02 310.23 L66.42 310.53 L65.88 310.73 L65.88 309.76 L66.80 309.25 L67.53 308.58 L68.24 307.77 L68.78 307.12 L69.20 307.12 Z M93.86 317.00 L92.86 317.00 L92.86 309.39 L92.35 309.79 L91.68 310.23 L91.07 310.53 L90.53 310.73 L90.53 309.76 L91.45 309.25 L92.19 308.58 L92.90 307.77 L93.43 307.12 L93.86 307.12 Z" fill="#000" />
<path d="M193.30 317.00 L192.30 317.00 L192.30 309.39 L191.79 309.79 L191.12 310.23 L190.51 310.53 L189.98 310.73 L189.98 309.76 L190.89 309.25 L191.63 308.58 L192.34 307.77 L192.87 307.12 L193.30 307.12 Z" fill="#000" />
<path d="M420.92 317.00 L419.93 317.00 L419.93 309.39 L419.42 309.79 L418.75 310.23 L418.14 310.53 L417.60 310.73 L417.60 309.76 L418.52 309.25 L419.25 308.58 L419.97 307.77 L420.50 307.12 L420.92 307.12 Z M453.34 317.00 L452.35 317.00 L452.35 309.39 L451.84 309.79 L451.17 310.23 L450.56 310.53 L450.02 310.73 L450.02 309.76 L450.94 309.25 L451.67 308.58 L452.39 307.77 L452.92 307.12 L453.34 307.12 Z" fill="#000" clip-path="url(#cC)"/>
<path d="M553.14 317.00 L552.14 317.00 L552.14 309.39 L551.64 309.79 L550.96 310.23 L550.36 310.53 L549.82 310.73 L549.82 309.76 L550.74 309.25 L551.47 308.58 L552.18 307.77 L552.72 307.12 L553.14 307.12 Z M560.11 317.00 L559.11 317.00 L559.11 309.39 L558.61 309.79 L557.93 310.23 L557.33 310.53 L556.79 310.73 L556.79 309.76 L557.70 309.25 L558.44 308.58 L559.15 307.77 L559.69 307.12 L560.11 307.12 Z M567.08 317.00 L566.08 317.00 L566.08 309.39 L565.58 309.79 L564.90 310.23 L564.30 310.53 L563.76 310.73 L563.76 309.76 L564.67 309.25 L565.41 308.58 L566.12 307.77 L566.65 307.12 L567.08 307.12 Z" fill="#000" />
<path d="M778.66 317.00 L777.66 317.00 L777.66 309.39 L777.15 309.79 L776.48 310.23 L775.87 310.53 L775.33 310.73 L775.33 309.76 L776.25 309.25 L776.99 308.58 L777.70 307.77 L778.23 307.12 L778.66 307.12 Z" fill="#000" />
<path d="M857.50 317.00 L856.50 317.00 L856.50 309.39 L856.00 309.79 L855.32 310.23 L854.72 310.53 L854.18 310.73 L854.18 309.76 L855.10 309.25 L855.83 308.58 L856.54 307.77 L857.08 307.12 L857.50 307.12 Z M889.02 317.00 L888.02 317.00 L888.02 309.39 L887.51 309.79 L886.84 310.23 L886.23 310.53 L885.69 310.73 L885.69 309.76 L886.61 309.25 L887.35 308.58 L888.06 307.77 L888.59 307.12 L889.02 307.12 Z" fill="#000" />
<path d="M44.56 336.00 L43.56 336.00 L43.56 328.39 L43.06 328.79 L42.38 329.23 L41.78 329.53 L41.24 329.73 L41.24 328.76 L42.15 328.25 L42.89 327.58 L43.60 326.77 L44.14 326.12 L44.56 326.12 Z M69.20 336.00 L68.20 336.00 L68.20 328.39 L67.70 328.79 L67.02 329.23 L66.42 329.53 L65.88 329.73 L65.88 328.76 L66.80 328.25 L67.53 327.58 L68.24 326.77 L68.78 326.12 L69.20 326.12 Z M93.86 336.00 L92.86 336.00 L92.86 328.39 L92.35 328.79 L91.68 329.23 L91.07 329.53 L90.53 329.73 L90.53 328.76 L91.45 328.25 L92.19 327.58 L92.90 326.77 L93.43 326.12 L93.86 326.12 Z" fill="#000" />
<path d="M193.30 336.00 L192.30 336.00 L192.30 328.39 L191.79 328.79 L191.12 329.23 L190.51 329.53 L189.98 329.73 L189.98 328.76 L190.89 328.25 L191.63 327.58 L192.34 326.77 L192.87 326.12 L193.30 326.12 Z" fill="#000" />
<path d="M403.36 336.00 L402.36 336.00 L402.36 328.39 L401.86 328.79 L401.18 329.23 L400.58 329.53 L400.04 329.73 L400.04 328.76 L400.95 328.25 L401.69 327.58 L402.40 326.77 L402.94 326.12 L403.36 326.12 Z M428.53 336.00 L427.53 336.00 L427.53 328.39 L427.03 328.79 L426.36 329.23 L425.75 329.53 L425.21 329.73 L425.21 328.76 L426.13 328.25 L426.86 327.58 L427.58 326.77 L428.11 326.12 L428.53 326.12 Z" fill="#000" clip-path="url(#cC)"/>
<path d="M553.14 336.00 L552.14 336.00 L552.14 328.39 L551.64 328.79 L550.96 329.23 L550.36 329.53 L549.82 329.73 L549.82 328.76 L550.74 328.25 L551.47 327.58 L552.18 326.77 L552.72 326.12 L553.14 326.12 Z M560.11 336.00 L559.11 336.00 L559.11 328.39 L558.61 328.79 L557.93 329.23 L557.33 329.53 L556.79 329.73 L556.79 328.76 L557.70 328.25 L558.44 327.58 L559.15 326.77 L559.69 326.12 L560.11 326.12 Z M567.08 336.00 L566.08 336.00 L566.08 328.39 L565.58 328.79 L564.90 329.23 L564.30 329.53 L563.76 329.73 L563.76 328.76 L564.67 328.25 L565.41 327.58 L566.12 326.77 L566.65 326.12 L567.08 326.12 Z" fill="#000" />
<path d="M778.66 336.00 L777.66 336.00 L777.66 328.39 L777.15 328.79 L776.48 329.23 L775.87 329.53 L775.33 329.73 L775.33 328.76 L776.25 328.25 L776.99 327.58 L777.70 326.77 L778.23 326.12 L778.66 326.12 Z M796.03 336.00 L795.03 336.00 L795.03 328.39 L794.53 328.79 L793.86 329.23 L793.25 329.53 L792.71 329.73 L792.71 328.76 L793.63 328.25 L794.36 327.58 L795.08 326.77 L795.61 326.12 L796.03 326.12 Z M813.41 336.00 L812.41 336.00 L812.41 328.39 L811.90 328.79 L811.23 329.23 L810.62 329.53 L810.08 329.73 L810.08 328.76 L811.00 328.25 L811.74 327.58 L812.45 326.77 L812.98 326.12 L813.41 326.12 Z" fill="#000" />
<path d="M857.50 336.00 L856.50 336.00 L856.50 328.39 L856.00 328.79 L855.32 329.23 L854.72 329.53 L854.18 329.73 L854.18 328.76 L855.10 328.25 L855.83 327.58 L856.54 326.77 L857.08 326.12 L857.50 326.12 Z M881.94 336.00 L880.94 336.00 L880.94 328.39 L880.44 328.79 L879.76 329.23 L879.16 329.53 L878.62 329.73 L878.62 328.76 L879.53 328.25 L880.27 327.58 L880.98 326.77 L881.51 326.12 L881.94 326.12 Z M906.39 336.00 L905.39 336.00 L905.39 328.39 L904.89 328.79 L904.21 329.23 L903.61 329.53 L903.07 329.73 L903.07 328.76 L903.99 328.25 L904.72 327.58 L905.43 326.77 L905.97 326.12 L906.39 326.12 Z" fill="#000" />
<path d="M44.56 355.00 L43.56 355.00 L43.56 347.39 L43.06 347.79 L42.38 348.23 L41.78 348.53 L41.24 348.73 L41.24 347.76 L42.15 347.25 L42.89 346.58 L43.60 345.77 L44.14 345.12 L44.56 345.12 Z M69.20 355.00 L68.20 355.00 L68.20 347.39 L67.70 347.79 L67.02 348.23 L66.42 348.53 L65.88 348.73 L65.88 347.76 L66.80 347.25 L67.53 346.58 L68.24 345.77 L68.78 345.12 L69.20 345.12 Z M93.86 355.00 L92.86 355.00 L92.86 347.39 L92.35 347.79 L91.68 348.23 L91.07 348.53 L90.53 348.73 L90.53 347.76 L91.45 347.25 L92.19 346.58 L92.90 345.77 L93.43 345.12 L93.86 345.12 Z" fill="#000" />
<path d="M193.30 355.00 L192.30 355.00 L192.30 347.39 L191.79 347.79 L191.12 348.23 L190.51 348.53 L189.98 348.73 L189.98 347.76 L190.89 347.25 L191.63 346.58 L192.34 345.77 L192.87 345.12 L193.30 345.12 Z" fill="#000" />
<path d="M403.36 355.00 L402.36 355.00 L402.36 347.39 L401.86 347.79 L401.18 348.23 L400.58 348.53 L400.04 348.73 L400.04 347.76 L400.95 347.25 L401.69 346.58 L402.40 345.77 L402.94 345.12 L403.36 345.12 Z M428.53 355.00 L427.53 355.00 L427.53 347.39 L427.03 347.79 L426.36 348.23 L425.75 348.53 L425.21 348.73 L425.21 347.76 L426.13 347.25 L426.86 346.58 L427.58 345.77 L428.11 345.12 L428.53 345.12 Z" fill="#000" clip-path="url(#cC)"/>
<path d="M553.14 355.00 L552.14 355.00 L552.14 347.39 L551.64 347.79 L550.96 348.23 L550.36 348.53 L549.82 348.73 L549.82 347.76 L550.74 347.25 L551.47 346.58 L552.18 345.77 L552.72 345.12 L553.14 345.12 Z M560.11 355.00 L559.11 355.00 L559.11 347.39 L558.61 347.79 L557.93 348.23 L557.33 348.53 L556.79 348.73 L556.79 347.76 L557.70 347.25 L558.44 346.58 L559.15 345.77 L559.69 345.12 L560.11 345.12 Z M567.08 355.00 L566.08 355.00 L566.08 347.39 L565.58 347.79 L564.90 348.23 L564.30 348.53 L563.76 348.73 L563.76 347.76 L564.67 347.25 L565.41 346.58 L566.12 345.77 L566.65 345.12 L567.08 345.12 Z" fill="#000" />
<path d="M857.50 355.00 L856.50 355.00 L856.50 347.39 L856.00 347.79 L855.32 348.23 L854.72 348.53 L854.18 348.73 L854.18 347.76 L855.10 347.25 L855.83 346.58 L856.54 345.77 L857.08 345.12 L857.50 345.12 Z" fill="#000" />
<path d="M44.56 374.00 L43.56 374.00 L43.56 366.39 L43.06 366.79 L42.38 367.23 L41.78 367.53 L41.24 367.73 L41.24 366.76 L42.15 366.25 L42.89 365.58 L43.60 364.77 L44.14 364.12 L44.56 364.12 Z M69.20 374.00 L68.20 374.00 L68.20 366.39 L67.70 366.79 L67.02 367.23 L66.42 367.53 L65.88 367.73 L65.88 366.76 L66.80 366.25 L67.53 365.58 L68.24 364.77 L68.78 364.12 L69.20 364.12 Z M93.86 374.00 L92.86 374.00 L92.86 366.39 L92.35 366.79 L91.68 367.23 L91.07 367.53 L90.53 367.73 L90.53 366.76 L91.45 366.25 L92.19 365.58 L92.90 364.77 L93.43 364.12 L93.86 364.12 Z" fill="#000" />
<path d="M193.30 374.00 L192.30 374.00 L192.30 366.39 L191.79 366.79 L191.12 367.23 L190.51 367.53 L189.98 367.73 L189.98 366.76 L190.89 366.25 L191.63 365.58 L192.34 364.77 L192.87 364.12 L193.30 364.12 Z" fill="#000" />
<path d="M391.59 374.00 L390.60 374.00 L390.60 366.39 L390.09 366.79 L389.42 367.23 L388.81 367.53 L388.27 367.73 L388.27 366.76 L389.19 366.25 L389.92 365.58 L390.64 364.77 L391.17 364.12 L391.59 364.12 Z M416.77 374.00 L415.77 374.00 L415.77 366.39 L415.26 366.79 L414.59 367.23 L413.98 367.53 L413.44 367.73 L413.44 366.76 L414.36 366.25 L415.10 365.58 L415.81 364.77 L416.34 364.12 L416.77 364.12 Z" fill="#000" clip-path="url(#cC)"/>
<path d="M553.14 374.00 L552.14 374.00 L552.14 366.39 L551.64 366.79 L550.96 367.23 L550.36 367.53 L549.82 367.73 L549.82 366.76 L550.74 366.25 L551.47 365.58 L552.18 364.77 L552.72 364.12 L553.14 364.12 Z M560.11 374.00 L559.11 374.00 L559.11 366.39 L558.61 366.79 L557.93 367.23 L557.33 367.53 L556.79 367.73 L556.79 366.76 L557.70 366.25 L558.44 365.58 L559.15 364.77 L559.69 364.12 L560.11 364.12 Z M567.08 374.00 L566.08 374.00 L566.08 366.39 L565.58 366.79 L564.90 367.23 L564.30 367.53 L563.76 367.73 L563.76 366.76 L564.67 366.25 L565.41 365.58 L566.12 364.77 L566.65 364.12 L567.08 364.12 Z" fill="#000" />
<path d="M602.14 374.00 L601.14 374.00 L601.14 366.39 L600.64 366.79 L599.96 367.23 L599.36 367.53 L598.82 367.73 L598.82 366.76 L599.74 366.25 L600.47 365.58 L601.18 364.77 L601.72 364.12 L602.14 364.12 Z M623.05 374.00 L622.05 374.00 L622.05 366.39 L621.54 366.79 L620.87 367.23 L620.26 367.53 L619.73 367.73 L619.73 366.76 L620.64 366.25 L621.38 365.58 L622.09 364.77 L622.62 364.12 L623.05 364.12 Z" fill="#000" />
<path d="M857.50 374.00 L856.50 374.00 L856.50 366.39 L856.00 366.79 L855.32 367.23 L854.72 367.53 L854.18 367.73 L854.18 366.76 L855.10 366.25 L855.83 365.58 L856.54 364.77 L857.08 364.12 L857.50 364.12 Z" fill="#000" />
<path d="M44.56 393.00 L43.56 393.00 L43.56 385.39 L43.06 385.79 L42.38 386.23 L41.78 386.53 L41.24 386.73 L41.24 385.76 L42.15 385.25 L42.89 384.58 L43.60 383.77 L44.14 383.12 L44.56 383.12 Z M69.20 393.00 L68.20 393.00 L68.20 385.39 L67.70 385.79 L67.02 386.23 L66.42 386.53 L65.88 386.73 L65.88 385.76 L66.80 385.25 L67.53 384.58 L68.24 383.77 L68.78 383.12 L69.20 383.12 Z M93.86 393.00 L92.86 393.00 L92.86 385.39 L92.35 385.79 L91.68 386.23 L91.07 386.53 L90.53 386.73 L90.53 385.76 L91.45 385.25 L92.19 384.58 L92.90 383.77 L93.43 383.12 L93.86 383.12 Z" fill="#000" />
<path d="M193.30 393.00 L192.30 393.00 L192.30 385.39 L191.79 385.79 L191.12 386.23 L190.51 386.53 L189.98 386.73 L189.98 385.76 L190.89 385.25 L191.63 384.58 L192.34 383.77 L192.87 383.12 L193.30 383.12 Z" fill="#000" />
<path d="M553.14 393.00 L552.14 393.00 L552.14 385.39 L551.64 385.79 L550.96 386.23 L550.36 386.53 L549.82 386.73 L549.82 385.76 L550.74 385.25 L551.47 384.58 L552.18 383.77 L552.72 383.12 L553.14 383.12 Z M560.11 393.00 L559.11 393.00 L559.11 385.39 L558.61 385.79 L557.93 386.23 L557.33 386.53 L556.79 386.73 L556.79 385.76 L557.70 385.25 L558.44 384.58 L559.15 383.77 L559.69 383.12 L560.11 383.12 Z M567.08 393.00 L566.08 393.00 L566.08 385.39 L565.58 385.79 L564.90 386.23 L564.30 386.53 L563.76 386.73 L563.76 385.76 L564.67 385.25 L565.41 384.58 L566.12 383.77 L566.65 383.12 L567.08 383.12 Z" fill="#000" />
<path d="M827.55 393.00 L826.55 393.00 L826.55 385.39 L826.04 385.79 L825.37 386.23 L824.76 386.53 L824.23 386.73 L824.23 385.76 L825.14 385.25 L825.88 384.58 L826.59 383.77 L827.12 383.12 L827.55 383.12 Z" fill="#000" />
<path d="M857.50 393.00 L856.50 393.00 L856.50 385.39 L856.00 385.79 L855.32 386.23 L854.72 386.53 L854.18 386.73 L854.18 385.76 L855.10 385.25 L855.83 384.58 L856.54 383.77 L857.08 383.12 L857.50 383.12 Z" fill="#000" />
<path d="M44.56 412.00 L43.56 412.00 L43.56 404.39 L43.06 404.79 L42.38 405.23 L41.78 405.53 L41.24 405.73 L41.24 404.76 L42.15 404.25 L42.89 403.58 L43.60 402.77 L44.14 402.12 L44.56 402.12 Z M69.20 412.00 L68.20 412.00 L68.20 404.39 L67.70 404.79 L67.02 405.23 L66.42 405.53 L65.88 405.73 L65.88 404.76 L66.80 404.25 L67.53 403.58 L68.24 402.77 L68.78 402.12 L69.20 402.12 Z M93.86 412.00 L92.86 412.00 L92.86 404.39 L92.35 404.79 L91.68 405.23 L91.07 405.53 L90.53 405.73 L90.53 404.76 L91.45 404.25 L92.19 403.58 L92.90 402.77 L93.43 402.12 L93.86 402.12 Z" fill="#000" />
<path d="M193.30 412.00 L192.30 412.00 L192.30 404.39 L191.79 404.79 L191.12 405.23 L190.51 405.53 L189.98 405.73 L189.98 404.76 L190.89 404.25 L191.63 403.58 L192.34 402.77 L192.87 402.12 L193.30 402.12 Z" fill="#000" />
<path d="M431.19 412.00 L430.19 412.00 L430.19 404.39 L429.69 404.79 L429.01 405.23 L428.41 405.53 L427.87 405.73 L427.87 404.76 L428.78 404.25 L429.52 403.58 L430.23 402.77 L430.76 402.12 L431.19 402.12 Z M463.61 412.00 L462.61 412.00 L462.61 404.39 L462.11 404.79 L461.43 405.23 L460.83 405.53 L460.29 405.73 L460.29 404.76 L461.20 404.25 L461.94 403.58 L462.65 402.77 L463.19 402.12 L463.61 402.12 Z" fill="#000" clip-path="url(#cC)"/>
<path d="M553.14 412.00 L552.14 412.00 L552.14 404.39 L551.64 404.79 L550.96 405.23 L550.36 405.53 L549.82 405.73 L549.82 404.76 L550.74 404.25 L551.47 403.58 L552.18 402.77 L552.72 402.12 L553.14 402.12 Z M560.11 412.00 L559.11 412.00 L559.11 404.39 L558.61 404.79 L557.93 405.23 L557.33 405.53 L556.79 405.73 L556.79 404.76 L557.70 404.25 L558.44 403.58 L559.15 402.77 L559.69 402.12 L560.11 402.12 Z M567.08 412.00 L566.08 412.00 L566.08 404.39 L565.58 404.79 L564.90 405.23 L564.30 405.53 L563.76 405.73 L563.76 404.76 L564.67 404.25 L565.41 403.58 L566.12 402.77 L566.65 402.12 L567.08 402.12 Z" fill="#000" />
<path d="M796.02 412.00 L795.02 412.00 L795.02 404.39 L794.51 404.79 L793.84 405.23 L793.23 405.53 L792.69 405.73 L792.69 404.76 L793.61 404.25 L794.35 403.58 L795.06 402.77 L795.59 402.12 L796.02 402.12 Z M820.47 412.00 L819.47 412.00 L819.47 404.39 L818.97 404.79 L818.29 405.23 L817.69 405.53 L817.15 405.73 L817.15 404.76 L818.06 404.25 L818.80 403.58 L819.51 402.77 L820.04 402.12 L820.47 402.12 Z" fill="#000" />
<path d="M857.50 412.00 L856.50 412.00 L856.50 404.39 L856.00 404.79 L855.32 405.23 L854.72 405.53 L854.18 405.73 L854.18 404.76 L855.10 404.25 L855.83 403.58 L856.54 402.77 L857.08 402.12 L857.50 402.12 Z M871.64 412.00 L870.64 412.00 L870.64 404.39 L870.14 404.79 L869.46 405.23 L868.86 405.53 L868.32 405.73 L868.32 404.76 L869.24 404.25 L869.97 403.58 L870.68 402.77 L871.22 402.12 L871.64 402.12 Z M896.09 412.00 L895.10 412.00 L895.10 404.39 L894.59 404.79 L893.92 405.23 L893.31 405.53 L892.77 405.73 L892.77 404.76 L893.69 404.25 L894.42 403.58 L895.14 402.77 L895.67 402.12 L896.09 402.12 Z" fill="#000" />
<path d="M44.56 431.00 L43.56 431.00 L43.56 423.39 L43.06 423.79 L42.38 424.23 L41.78 424.53 L41.24 424.73 L41.24 423.76 L42.15 423.25 L42.89 422.58 L43.60 421.77 L44.14 421.12 L44.56 421.12 Z M69.20 431.00 L68.20 431.00 L68.20 423.39 L67.70 423.79 L67.02 424.23 L66.42 424.53 L65.88 424.73 L65.88 423.76 L66.80 423.25 L67.53 422.58 L68.24 421.77 L68.78 421.12 L69.20 421.12 Z M93.86 431.00 L92.86 431.00 L92.86 423.39 L92.35 423.79 L91.68 424.23 L91.07 424.53 L90.53 424.73 L90.53 423.76 L91.45 423.25 L92.19 422.58 L92.90 421.77 L93.43 421.12 L93.86 421.12 Z" fill="#000" />
<path d="M193.30 431.00 L192.30 431.00 L192.30 423.39 L191.79 423.79 L191.12 424.23 L190.51 424.53 L189.98 424.73 L189.98 423.76 L190.89 423.25 L191.63 422.58 L192.34 421.77 L192.87 421.12 L193.30 421.12 Z" fill="#000" />
<path d="M431.19 431.00 L430.19 431.00 L430.19 423.39 L429.69 423.79 L429.01 424.23 L428.41 424.53 L427.87 424.73 L427.87 423.76 L428.78 423.25 L429.52 422.58 L430.23 421.77 L430.76 421.12 L431.19 421.12 Z M463.61 431.00 L462.61 431.00 L462.61 423.39 L462.11 423.79 L461.43 424.23 L460.83 424.53 L460.29 424.73 L460.29 423.76 L461.20 423.25 L461.94 422.58 L462.65 421.77 L463.19 421.12 L463.61 421.12 Z" fill="#000" clip-path="url(#cC)"/>
<path d="M553.14 431.00 L552.14 431.00 L552.14 423.39 L551.64 423.79 L550.96 424.23 L550.36 424.53 L549.82 424.73 L549.82 423.76 L550.74 423.25 L551.47 422.58 L552.18 421.77 L552.72 421.12 L553.14 421.12 Z M560.11 431.00 L559.11 431.00 L559.11 423.39 L558.61 423.79 L557.93 424.23 L557.33 424.53 L556.79 424.73 L556.79 423.76 L557.70 423.25 L558.44 422.58 L559.15 421.77 L559.69 421.12 L560.11 421.12 Z M567.08 431.00 L566.08 431.00 L566.08 423.39 L565.58 423.79 L564.90 424.23 L564.30 424.53 L563.76 424.73 L563.76 423.76 L564.67 423.25 L565.41 422.58 L566.12 421.77 L566.65 421.12 L567.08 421.12 Z" fill="#000" />
<path d="M602.14 431.00 L601.14 431.00 L601.14 423.39 L600.64 423.79 L599.96 424.23 L599.36 424.53 L598.82 424.73 L598.82 423.76 L599.74 423.25 L600.47 422.58 L601.18 421.77 L601.72 421.12 L602.14 421.12 Z M623.05 431.00 L622.05 431.00 L622.05 423.39 L621.54 423.79 L620.87 424.23 L620.26 424.53 L619.73 424.73 L619.73 423.76 L620.64 423.25 L621.38 422.58 L622.09 421.77 L622.62 421.12 L623.05 421.12 Z" fill="#000" />
<path d="M803.09 431.00 L802.10 431.00 L802.10 423.39 L801.59 423.79 L800.92 424.23 L800.31 424.53 L799.77 424.73 L799.77 423.76 L800.69 423.25 L801.42 422.58 L802.14 421.77 L802.67 421.12 L803.09 421.12 Z M827.55 431.00 L826.55 431.00 L826.55 423.39 L826.04 423.79 L825.37 424.23 L824.76 424.53 L824.23 424.73 L824.23 423.76 L825.14 423.25 L825.88 422.58 L826.59 421.77 L827.12 421.12 L827.55 421.12 Z" fill="#000" />
<path d="M857.50 431.00 L856.50 431.00 L856.50 423.39 L856.00 423.79 L855.32 424.23 L854.72 424.53 L854.18 424.73 L854.18 423.76 L855.10 423.25 L855.83 422.58 L856.54 421.77 L857.08 421.12 L857.50 421.12 Z M871.64 431.00 L870.64 431.00 L870.64 423.39 L870.14 423.79 L869.46 424.23 L868.86 424.53 L868.32 424.73 L868.32 423.76 L869.24 423.25 L869.97 422.58 L870.68 421.77 L871.22 421.12 L871.64 421.12 Z" fill="#000" />
<path d="M44.56 450.00 L43.56 450.00 L43.56 442.39 L43.06 442.79 L42.38 443.23 L41.78 443.53 L41.24 443.73 L41.24 442.76 L42.15 442.25 L42.89 441.58 L43.60 440.77 L44.14 440.12 L44.56 440.12 Z M69.20 450.00 L68.20 450.00 L68.20 442.39 L67.70 442.79 L67.02 443.23 L66.42 443.53 L65.88 443.73 L65.88 442.76 L66.80 442.25 L67.53 441.58 L68.24 440.77 L68.78 440.12 L69.20 440.12 Z M93.86 450.00 L92.86 450.00 L92.86 442.39 L92.35 442.79 L91.68 443.23 L91.07 443.53 L90.53 443.73 L90.53 442.76 L91.45 442.25 L92.19 441.58 L92.90 440.77 L93.43 440.12 L93.86 440.12 Z" fill="#000" />
<path d="M193.30 450.00 L192.30 450.00 L192.30 442.39 L191.79 442.79 L191.12 443.23 L190.51 443.53 L189.98 443.73 L189.98 442.76 L190.89 442.25 L191.63 441.58 L192.34 440.77 L192.87 440.12 L193.30 440.12 Z" fill="#000" />
<path d="M553.14 450.00 L552.14 450.00 L552.14 442.39 L551.64 442.79 L550.96 443.23 L550.36 443.53 L549.82 443.73 L549.82 442.76 L550.74 442.25 L551.47 441.58 L552.18 440.77 L552.72 440.12 L553.14 440.12 Z M560.11 450.00 L559.11 450.00 L559.11 442.39 L558.61 442.79 L557.93 443.23 L557.33 443.53 L556.79 443.73 L556.79 442.76 L557.70 442.25 L558.44 441.58 L559.15 440.77 L559.69 440.12 L560.11 440.12 Z M567.08 450.00 L566.08 450.00 L566.08 442.39 L565.58 442.79 L564.90 443.23 L564.30 443.53 L563.76 443.73 L563.76 442.76 L564.67 442.25 L565.41 441.58 L566.12 440.77 L566.65 440.12 L567.08 440.12 Z" fill="#000" />
<path d="M630.03 450.00 L629.03 450.00 L629.03 442.39 L628.53 442.79 L627.86 443.23 L627.25 443.53 L626.71 443.73 L626.71 442.76 L627.63 442.25 L628.36 441.58 L629.08 440.77 L629.61 440.12 L630.03 440.12 Z" fill="#000" />
<path d="M788.95 450.00 L787.96 450.00 L787.96 442.39 L787.45 442.79 L786.78 443.23 L786.17 443.53 L785.63 443.73 L785.63 442.76 L786.55 442.25 L787.28 441.58 L788.00 440.77 L788.53 440.12 L788.95 440.12 Z" fill="#000" />
<path d="M857.50 450.00 L856.50 450.00 L856.50 442.39 L856.00 442.79 L855.32 443.23 L854.72 443.53 L854.18 443.73 L854.18 442.76 L855.10 442.25 L855.83 441.58 L856.54 440.77 L857.08 440.12 L857.50 440.12 Z M871.64 450.00 L870.64 450.00 L870.64 442.39 L870.14 442.79 L869.46 443.23 L868.86 443.53 L868.32 443.73 L868.32 442.76 L869.24 442.25 L869.97 441.58 L870.68 440.77 L871.22 440.12 L871.64 440.12 Z M913.47 450.00 L912.47 450.00 L912.47 442.39 L911.97 442.79 L911.29 443.23 L910.69 443.53 L910.15 443.73 L910.15 442.76 L911.06 442.25 L911.80 441.58 L912.51 440.77 L913.04 440.12 L913.47 440.12 Z" fill="#000" />
<path d="M44.56 469.00 L43.56 469.00 L43.56 461.39 L43.06 461.79 L42.38 462.23 L41.78 462.53 L41.24 462.73 L41.24 461.76 L42.15 461.25 L42.89 460.58 L43.60 459.77 L44.14 459.12 L44.56 459.12 Z M69.20 469.00 L68.20 469.00 L68.20 461.39 L67.70 461.79 L67.02 462.23 L66.42 462.53 L65.88 462.73 L65.88 461.76 L66.80 461.25 L67.53 460.58 L68.24 459.77 L68.78 459.12 L69.20 459.12 Z M93.86 469.00 L92.86 469.00 L92.86 461.39 L92.35 461.79 L91.68 462.23 L91.07 462.53 L90.53 462.73 L90.53 461.76 L91.45 461.25 L92.19 460.58 L92.90 459.77 L93.43 459.12 L93.86 459.12 Z" fill="#000" />
<path d="M193.30 469.00 L192.30 469.00 L192.30 461.39 L191.79 461.79 L191.12 462.23 L190.51 462.53 L189.98 462.73 L189.98 461.76 L190.89 461.25 L191.63 460.58 L192.34 459.77 L192.87 459.12 L193.30 459.12 Z" fill="#000" />
<path d="M553.14 469.00 L552.14 469.00 L552.14 461.39 L551.64 461.79 L550.96 462.23 L550.36 462.53 L549.82 462.73 L549.82 461.76 L550.74 461.25 L551.47 460.58 L552.18 459.77 L552.72 459.12 L553.14 459.12 Z M560.11 469.00 L559.11 469.00 L559.11 461.39 L558.61 461.79 L557.93 462.23 L557.33 462.53 L556.79 462.73 L556.79 461.76 L557.70 461.25 L558.44 460.58 L559.15 459.77 L559.69 459.12 L560.11 459.12 Z M567.08 469.00 L566.08 469.00 L566.08 461.39 L565.58 461.79 L564.90 462.23 L564.30 462.53 L563.76 462.73 L563.76 461.76 L564.67 461.25 L565.41 460.58 L566.12 459.77 L566.65 459.12 L567.08 459.12 Z" fill="#000" />
<path d="M630.03 469.00 L629.03 469.00 L629.03 461.39 L628.53 461.79 L627.86 462.23 L627.25 462.53 L626.71 462.73 L626.71 461.76 L627.63 461.25 L628.36 460.58 L629.08 459.77 L629.61 459.12 L630.03 459.12 Z" fill="#000" />
<path d="M857.50 469.00 L856.50 469.00 L856.50 461.39 L856.00 461.79 L855.32 462.23 L854.72 462.53 L854.18 462.73 L854.18 461.76 L855.10 461.25 L855.83 460.58 L856.54 459.77 L857.08 459.12 L857.50 459.12 Z M871.64 469.00 L870.64 469.00 L870.64 461.39 L870.14 461.79 L869.46 462.23 L868.86 462.53 L868.32 462.73 L868.32 461.76 L869.24 461.25 L869.97 460.58 L870.68 459.77 L871.22 459.12 L871.64 459.12 Z M920.55 469.00 L919.55 469.00 L919.55 461.39 L919.04 461.79 L918.37 462.23 L917.76 462.53 L917.23 462.73 L917.23 461.76 L918.14 461.25 L918.88 460.58 L919.59 459.77 L920.12 459.12 L920.55 459.12 Z" fill="#000" />
<path d="M44.56 488.00 L43.56 488.00 L43.56 480.39 L43.06 480.79 L42.38 481.23 L41.78 481.53 L41.24 481.73 L41.24 480.76 L42.15 480.25 L42.89 479.58 L43.60 478.77 L44.14 478.12 L44.56 478.12 Z M69.20 488.00 L68.20 488.00 L68.20 480.39 L67.70 480.79 L67.02 481.23 L66.42 481.53 L65.88 481.73 L65.88 480.76 L66.80 480.25 L67.53 479.58 L68.24 478.77 L68.78 478.12 L69.20 478.12 Z M93.86 488.00 L92.86 488.00 L92.86 480.39 L92.35 480.79 L91.68 481.23 L91.07 481.53 L90.53 481.73 L90.53 480.76 L91.45 480.25 L92.19 479.58 L92.90 478.77 L93.43 478.12 L93.86 478.12 Z" fill="#000" />
<path d="M193.30 488.00 L192.30 488.00 L192.30 480.39 L191.79 480.79 L191.12 481.23 L190.51 481.53 L189.98 481.73 L189.98 480.76 L190.89 480.25 L191.63 479.58 L192.34 478.77 L192.87 478.12 L193.30 478.12 Z" fill="#000" />
<path d="M553.14 488.00 L552.14 488.00 L552.14 480.39 L551.64 480.79 L550.96 481.23 L550.36 481.53 L549.82 481.73 L549.82 480.76 L550.74 480.25 L551.47 479.58 L552.18 478.77 L552.72 478.12 L553.14 478.12 Z M560.11 488.00 L559.11 488.00 L559.11 480.39 L558.61 480.79 L557.93 481.23 L557.33 481.53 L556.79 481.73 L556.79 480.76 L557.70 480.25 L558.44 479.58 L559.15 478.77 L559.69 478.12 L560.11 478.12 Z M567.08 488.00 L566.08 488.00 L566.08 480.39 L565.58 480.79 L564.90 481.23 L564.30 481.53 L563.76 481.73 L563.76 480.76 L564.67 480.25 L565.41 479.58 L566.12 478.77 L566.65 478.12 L567.08 478.12 Z" fill="#000" />
<path d="M630.03 488.00 L629.03 488.00 L629.03 480.39 L628.53 480.79 L627.86 481.23 L627.25 481.53 L626.71 481.73 L626.71 480.76 L627.63 480.25 L628.36 479.58 L629.08 478.77 L629.61 478.12 L630.03 478.12 Z" fill="#000" />
<path d="M788.95 488.00 L787.96 488.00 L787.96 480.39 L787.45 480.79 L786.78 481.23 L786.17 481.53 L785.63 481.73 L785.63 480.76 L786.55 480.25 L787.28 479.58 L788.00 478.77 L788.53 478.12 L788.95 478.12 Z M813.39 488.00 L812.39 488.00 L812.39 480.39 L811.89 480.79 L811.21 481.23 L810.61 481.53 L810.07 481.73 L810.07 480.76 L810.99 480.25 L811.72 479.58 L812.43 478.77 L812.97 478.12 L813.39 478.12 Z" fill="#000" />
<path d="M857.50 488.00 L856.50 488.00 L856.50 480.39 L856.00 480.79 L855.32 481.23 L854.72 481.53 L854.18 481.73 L854.18 480.76 L855.10 480.25 L855.83 479.58 L856.54 478.77 L857.08 478.12 L857.50 478.12 Z M871.64 488.00 L870.64 488.00 L870.64 480.39 L870.14 480.79 L869.46 481.23 L868.86 481.53 L868.32 481.73 L868.32 480.76 L869.24 480.25 L869.97 479.58 L870.68 478.77 L871.22 478.12 L871.64 478.12 Z" fill="#000" />
<path d="M44.56 507.00 L43.56 507.00 L43.56 499.39 L43.06 499.79 L42.38 500.23 L41.78 500.53 L41.24 500.73 L41.24 499.76 L42.15 499.25 L42.89 498.58 L43.60 497.77 L44.14 497.12 L44.56 497.12 Z M69.20 507.00 L68.20 507.00 L68.20 499.39 L67.70 499.79 L67.02 500.23 L66.42 500.53 L65.88 500.73 L65.88 499.76 L66.80 499.25 L67.53 498.58 L68.24 497.77 L68.78 497.12 L69.20 497.12 Z M93.86 507.00 L92.86 507.00 L92.86 499.39 L92.35 499.79 L91.68 500.23 L91.07 500.53 L90.53 500.73 L90.53 499.76 L91.45 499.25 L92.19 498.58 L92.90 497.77 L93.43 497.12 L93.86 497.12 Z" fill="#000" />
<path d="M193.30 507.00 L192.30 507.00 L192.30 499.39 L191.79 499.79 L191.12 500.23 L190.51 500.53 L189.98 500.73 L189.98 499.76 L190.89 499.25 L191.63 498.58 L192.34 497.77 L192.87 497.12 L193.30 497.12 Z" fill="#000" />
<path d="M553.14 507.00 L552.14 507.00 L552.14 499.39 L551.64 499.79 L550.96 500.23 L550.36 500.53 L549.82 500.73 L549.82 499.76 L550.74 499.25 L551.47 498.58 L552.18 497.77 L552.72 497.12 L553.14 497.12 Z M560.11 507.00 L559.11 507.00 L559.11 499.39 L558.61 499.79 L557.93 500.23 L557.33 500.53 L556.79 500.73 L556.79 499.76 L557.70 499.25 L558.44 498.58 L559.15 497.77 L559.69 497.12 L560.11 497.12 Z M567.08 507.00 L566.08 507.00 L566.08 499.39 L565.58 499.79 L564.90 500.23 L564.30 500.53 L563.76 500.73 L563.76 499.76 L564.67 499.25 L565.41 498.58 L566.12 497.77 L566.65 497.12 L567.08 497.12 Z" fill="#000" />
<path d="M630.03 507.00 L629.03 507.00 L629.03 499.39 L628.53 499.79 L627.86 500.23 L627.25 500.53 L626.71 500.73 L626.71 499.76 L627.63 499.25 L628.36 498.58 L629.08 497.77 L629.61 497.12 L630.03 497.12 Z" fill="#000" />
<path d="M788.95 507.00 L787.96 507.00 L787.96 499.39 L787.45 499.79 L786.78 500.23 L786.17 500.53 L785.63 500.73 L785.63 499.76 L786.55 499.25 L787.28 498.58 L788.00 497.77 L788.53 497.12 L788.95 497.12 Z" fill="#000" />
<path d="M857.50 507.00 L856.50 507.00 L856.50 499.39 L856.00 499.79 L855.32 500.23 L854.72 500.53 L854.18 500.73 L854.18 499.76 L855.10 499.25 L855.83 498.58 L856.54 497.77 L857.08 497.12 L857.50 497.12 Z" fill="#000" />
<path d="M44.56 526.00 L43.56 526.00 L43.56 518.39 L43.06 518.79 L42.38 519.23 L41.78 519.53 L41.24 519.73 L41.24 518.76 L42.15 518.25 L42.89 517.58 L43.60 516.77 L44.14 516.12 L44.56 516.12 Z M69.20 526.00 L68.20 526.00 L68.20 518.39 L67.70 518.79 L67.02 519.23 L66.42 519.53 L65.88 519.73 L65.88 518.76 L66.80 518.25 L67.53 517.58 L68.24 516.77 L68.78 516.12 L69.20 516.12 Z M93.86 526.00 L92.86 526.00 L92.86 518.39 L92.35 518.79 L91.68 519.23 L91.07 519.53 L90.53 519.73 L90.53 518.76 L91.45 518.25 L92.19 517.58 L92.90 516.77 L93.43 516.12 L93.86 516.12 Z" fill="#000" />
<path d="M193.30 526.00 L192.30 526.00 L192.30 518.39 L191.79 518.79 L191.12 519.23 L190.51 519.53 L189.98 519.73 L189.98 518.76 L190.89 518.25 L191.63 517.58 L192.34 516.77 L192.87 516.12 L193.30 516.12 Z" fill="#000" />
<path d="M553.14 526.00 L552.14 526.00 L552.14 518.39 L551.64 518.79 L550.96 519.23 L550.36 519.53 L549.82 519.73 L549.82 518.76 L550.74 518.25 L551.47 517.58 L552.18 516.77 L552.72 516.12 L553.14 516.12 Z M560.11 526.00 L559.11 526.00 L559.11 518.39 L558.61 518.79 L557.93 519.23 L557.33 519.53 L556.79 519.73 L556.79 518.76 L557.70 518.25 L558.44 517.58 L559.15 516.77 L559.69 516.12 L560.11 516.12 Z M567.08 526.00 L566.08 526.00 L566.08 518.39 L565.58 518.79 L564.90 519.23 L564.30 519.53 L563.76 519.73 L563.76 518.76 L564.67 518.25 L565.41 517.58 L566.12 516.77 L566.65 516.12 L567.08 516.12 Z" fill="#000" />
<path d="M602.14 526.00 L601.14 526.00 L601.14 518.39 L600.64 518.79 L599.96 519.23 L599.36 519.53 L598.82 519.73 L598.82 518.76 L599.74 518.25 L600.47 517.58 L601.18 516.77 L601.72 516.12 L602.14 516.12 Z M623.05 526.00 L622.05 526.00 L622.05 518.39 L621.54 518.79 L620.87 519.23 L620.26 519.53 L619.73 519.73 L619.73 518.76 L620.64 518.25 L621.38 517.58 L622.09 516.77 L622.62 516.12 L623.05 516.12 Z" fill="#000" />
<path d="M827.55 526.00 L826.55 526.00 L826.55 518.39 L826.04 518.79 L825.37 519.23 L824.76 519.53 L824.23 519.73 L824.23 518.76 L825.14 518.25 L825.88 517.58 L826.59 516.77 L827.12 516.12 L827.55 516.12 Z" fill="#000" />
<path d="M857.50 526.00 L856.50 526.00 L856.50 518.39 L856.00 518.79 L855.32 519.23 L854.72 519.53 L854.18 519.73 L854.18 518.76 L855.10 518.25 L855.83 517.58 L856.54 516.77 L857.08 516.12 L857.50 516.12 Z" fill="#000" />
<path d="M44.56 545.00 L43.56 545.00 L43.56 537.39 L43.06 537.79 L42.38 538.23 L41.78 538.53 L41.24 538.73 L41.24 537.76 L42.15 537.25 L42.89 536.58 L43.60 535.77 L44.14 535.12 L44.56 535.12 Z M69.20 545.00 L68.20 545.00 L68.20 537.39 L67.70 537.79 L67.02 538.23 L66.42 538.53 L65.88 538.73 L65.88 537.76 L66.80 537.25 L67.53 536.58 L68.24 535.77 L68.78 535.12 L69.20 535.12 Z M93.86 545.00 L92.86 545.00 L92.86 537.39 L92.35 537.79 L91.68 538.23 L91.07 538.53 L90.53 538.73 L90.53 537.76 L91.45 537.25 L92.19 536.58 L92.90 535.77 L93.43 535.12 L93.86 535.12 Z" fill="#000" />
<path d="M193.30 545.00 L192.30 545.00 L192.30 537.39 L191.79 537.79 L191.12 538.23 L190.51 538.53 L189.98 538.73 L189.98 537.76 L190.89 537.25 L191.63 536.58 L192.34 535.77 L192.87 535.12 L193.30 535.12 Z" fill="#000" />
<path d="M553.14 545.00 L552.14 545.00 L552.14 537.39 L551.64 537.79 L550.96 538.23 L550.36 538.53 L549.82 538.73 L549.82 537.76 L550.74 537.25 L551.47 536.58 L552.18 535.77 L552.72 535.12 L553.14 535.12 Z M560.11 545.00 L559.11 545.00 L559.11 537.39 L558.61 537.79 L557.93 538.23 L557.33 538.53 L556.79 538.73 L556.79 537.76 L557.70 537.25 L558.44 536.58 L559.15 535.77 L559.69 535.12 L560.11 535.12 Z M567.08 545.00 L566.08 545.00 L566.08 537.39 L565.58 537.79 L564.90 538.23 L564.30 538.53 L563.76 538.73 L563.76 537.76 L564.67 537.25 L565.41 536.58 L566.12 535.77 L566.65 535.12 L567.08 535.12 Z" fill="#000" />
<path d="M630.03 545.00 L629.03 545.00 L629.03 537.39 L628.53 537.79 L627.86 538.23 L627.25 538.53 L626.71 538.73 L626.71 537.76 L627.63 537.25 L628.36 536.58 L629.08 535.77 L629.61 535.12 L630.03 535.12 Z" fill="#000" />
<path d="M820.47 545.00 L819.47 545.00 L819.47 537.39 L818.97 537.79 L818.29 538.23 L817.69 538.53 L817.15 538.73 L817.15 537.76 L818.06 537.25 L818.80 536.58 L819.51 535.77 L820.04 535.12 L820.47 535.12 Z" fill="#000" />
<path d="M857.50 545.00 L856.50 545.00 L856.50 537.39 L856.00 537.79 L855.32 538.23 L854.72 538.53 L854.18 538.73 L854.18 537.76 L855.10 537.25 L855.83 536.58 L856.54 535.77 L857.08 535.12 L857.50 535.12 Z M896.09 545.00 L895.10 545.00 L895.10 537.39 L894.59 537.79 L893.92 538.23 L893.31 538.53 L892.77 538.73 L892.77 537.76 L893.69 537.25 L894.42 536.58 L895.14 535.77 L895.67 535.12 L896.09 535.12 Z" fill="#000" />
<path d="M44.56 564.00 L43.56 564.00 L43.56 556.39 L43.06 556.79 L42.38 557.23 L41.78 557.53 L41.24 557.73 L41.24 556.76 L42.15 556.25 L42.89 555.58 L43.60 554.77 L44.14 554.12 L44.56 554.12 Z M69.20 564.00 L68.20 564.00 L68.20 556.39 L67.70 556.79 L67.02 557.23 L66.42 557.53 L65.88 557.73 L65.88 556.76 L66.80 556.25 L67.53 555.58 L68.24 554.77 L68.78 554.12 L69.20 554.12 Z M93.86 564.00 L92.86 564.00 L92.86 556.39 L92.35 556.79 L91.68 557.23 L91.07 557.53 L90.53 557.73 L90.53 556.76 L91.45 556.25 L92.19 555.58 L92.90 554.77 L93.43 554.12 L93.86 554.12 Z" fill="#000" />
<path d="M193.30 564.00 L192.30 564.00 L192.30 556.39 L191.79 556.79 L191.12 557.23 L190.51 557.53 L189.98 557.73 L189.98 556.76 L190.89 556.25 L191.63 555.58 L192.34 554.77 L192.87 554.12 L193.30 554.12 Z" fill="#000" />
<path d="M553.14 564.00 L552.14 564.00 L552.14 556.39 L551.64 556.79 L550.96 557.23 L550.36 557.53 L549.82 557.73 L549.82 556.76 L550.74 556.25 L551.47 555.58 L552.18 554.77 L552.72 554.12 L553.14 554.12 Z M560.11 564.00 L559.11 564.00 L559.11 556.39 L558.61 556.79 L557.93 557.23 L557.33 557.53 L556.79 557.73 L556.79 556.76 L557.70 556.25 L558.44 555.58 L559.15 554.77 L559.69 554.12 L560.11 554.12 Z M567.08 564.00 L566.08 564.00 L566.08 556.39 L565.58 556.79 L564.90 557.23 L564.30 557.53 L563.76 557.73 L563.76 556.76 L564.67 556.25 L565.41 555.58 L566.12 554.77 L566.65 554.12 L567.08 554.12 Z" fill="#000" />
<path d="M602.14 564.00 L601.14 564.00 L601.14 556.39 L600.64 556.79 L599.96 557.23 L599.36 557.53 L598.82 557.73 L598.82 556.76 L599.74 556.25 L600.47 555.58 L601.18 554.77 L601.72 554.12 L602.14 554.12 Z M623.05 564.00 L622.05 564.00 L622.05 556.39 L621.54 556.79 L620.87 557.23 L620.26 557.53 L619.73 557.73 L619.73 556.76 L620.64 556.25 L621.38 555.58 L622.09 554.77 L622.62 554.12 L623.05 554.12 Z" fill="#000" />
<path d="M857.50 564.00 L856.50 564.00 L856.50 556.39 L856.00 556.79 L855.32 557.23 L854.72 557.53 L854.18 557.73 L854.18 556.76 L855.10 556.25 L855.83 555.58 L856.54 554.77 L857.08 554.12 L857.50 554.12 Z M889.02 564.00 L888.02 564.00 L888.02 556.39 L887.51 556.79 L886.84 557.23 L886.23 557.53 L885.69 557.73 L885.69 556.76 L886.61 556.25 L887.35 555.58 L888.06 554.77 L888.59 554.12 L889.02 554.12 Z" fill="#000" />
<path d="M44.56 583.00 L43.56 583.00 L43.56 575.39 L43.06 575.79 L42.38 576.23 L41.78 576.53 L41.24 576.73 L41.24 575.76 L42.15 575.25 L42.89 574.58 L43.60 573.77 L44.14 573.12 L44.56 573.12 Z M69.20 583.00 L68.20 583.00 L68.20 575.39 L67.70 575.79 L67.02 576.23 L66.42 576.53 L65.88 576.73 L65.88 575.76 L66.80 575.25 L67.53 574.58 L68.24 573.77 L68.78 573.12 L69.20 573.12 Z M93.86 583.00 L92.86 583.00 L92.86 575.39 L92.35 575.79 L91.68 576.23 L91.07 576.53 L90.53 576.73 L90.53 575.76 L91.45 575.25 L92.19 574.58 L92.90 573.77 L93.43 573.12 L93.86 573.12 Z" fill="#000" />
<path d="M193.30 583.00 L192.30 583.00 L192.30 575.39 L191.79 575.79 L191.12 576.23 L190.51 576.53 L189.98 576.73 L189.98 575.76 L190.89 575.25 L191.63 574.58 L192.34 573.77 L192.87 573.12 L193.30 573.12 Z" fill="#000" />
<path d="M553.14 583.00 L552.14 583.00 L552.14 575.39 L551.64 575.79 L550.96 576.23 L550.36 576.53 L549.82 576.73 L549.82 575.76 L550.74 575.25 L551.47 574.58 L552.18 573.77 L552.72 573.12 L553.14 573.12 Z M560.11 583.00 L559.11 583.00 L559.11 575.39 L558.61 575.79 L557.93 576.23 L557.33 576.53 L556.79 576.73 L556.79 575.76 L557.70 575.25 L558.44 574.58 L559.15 573.77 L559.69 573.12 L560.11 573.12 Z M567.08 583.00 L566.08 583.00 L566.08 575.39 L565.58 575.79 L564.90 576.23 L564.30 576.53 L563.76 576.73 L563.76 575.76 L564.67 575.25 L565.41 574.58 L566.12 573.77 L566.65 573.12 L567.08 573.12 Z" fill="#000" />
<path d="M803.09 583.00 L802.10 583.00 L802.10 575.39 L801.59 575.79 L800.92 576.23 L800.31 576.53 L799.77 576.73 L799.77 575.76 L800.69 575.25 L801.42 574.58 L802.14 573.77 L802.67 573.12 L803.09 573.12 Z M820.47 583.00 L819.47 583.00 L819.47 575.39 L818.97 575.79 L818.29 576.23 L817.69 576.53 L817.15 576.73 L817.15 575.76 L818.06 575.25 L818.80 574.58 L819.51 573.77 L820.04 573.12 L820.47 573.12 Z" fill="#000" />
<path d="M857.50 583.00 L856.50 583.00 L856.50 575.39 L856.00 575.79 L855.32 576.23 L854.72 576.53 L854.18 576.73 L854.18 575.76 L855.10 575.25 L855.83 574.58 L856.54 573.77 L857.08 573.12 L857.50 573.12 Z" fill="#000" /></svg>
</body></html>
